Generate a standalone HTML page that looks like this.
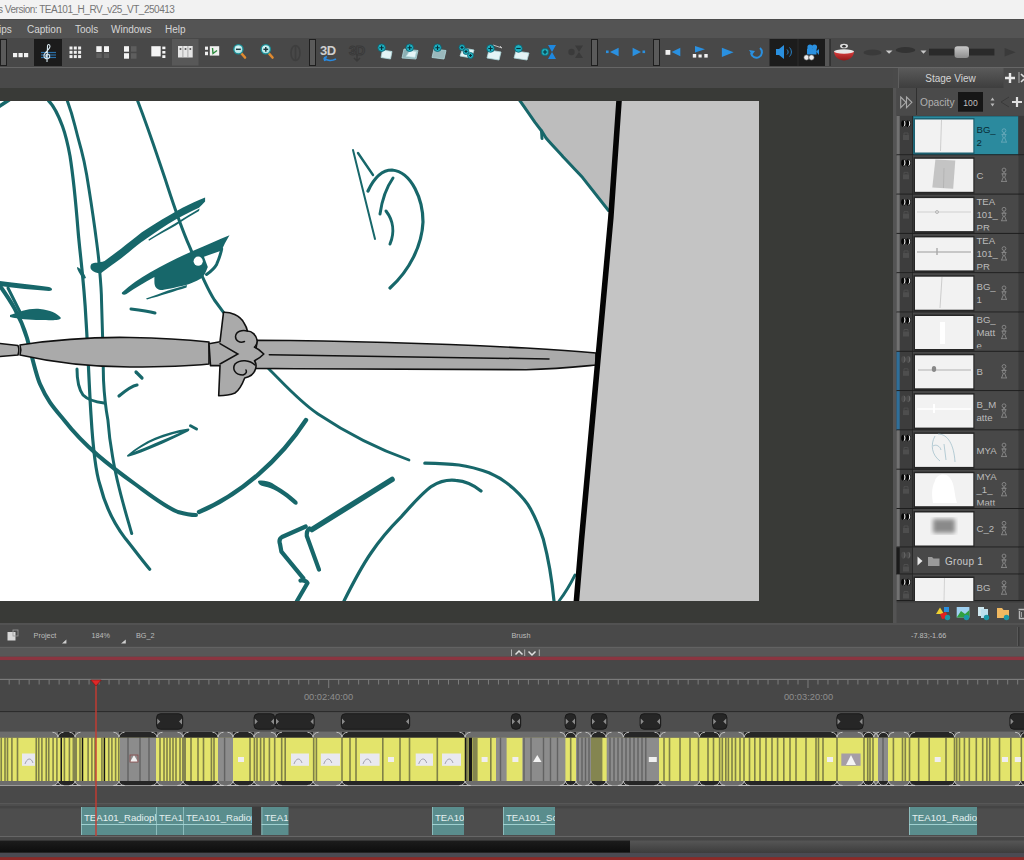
<!DOCTYPE html>
<html><head><meta charset="utf-8">
<style>
*{margin:0;padding:0;box-sizing:border-box}
html,body{width:1024px;height:860px;overflow:hidden;background:#474747;font-family:"Liberation Sans",sans-serif}
.a{position:absolute}
svg{overflow:hidden}
#title{left:0;top:0;width:1024px;height:19px;background:#f2f2f2;color:#767676;font-size:10px;letter-spacing:-0.48px}
#menu{left:0;top:19px;width:1024px;height:19px;background:#545454;border-top:1px solid #4c4c4c;color:#d6d6d6;font-size:10px}
#tool{left:0;top:38px;width:1024px;height:30px;background:#484848;border-bottom:1px solid #666}
#strip{left:0;top:68px;width:893px;height:20px;background:#494949}
#stage{left:0;top:88px;width:893px;height:535px;background:#393a37}
</style></head><body>
<div id="title" class="a"><span class="a" style="left:-2px;top:4px">s Version: TEA101_H_RV_v25_VT_250413</span></div>
<div id="menu" class="a">
<span class="a" style="left:-1px;top:4px">ips</span>
<span class="a" style="left:27px;top:4px">Caption</span>
<span class="a" style="left:75px;top:4px">Tools</span>
<span class="a" style="left:111px;top:4px">Windows</span>
<span class="a" style="left:165px;top:4px">Help</span>
</div>
<div id="tool" class="a"></div>
<div id="strip" class="a"></div>
<div id="stage" class="a"></div>

<svg class="a" style="left:0;top:38px" width="1024" height="30" viewBox="0 38 1024 30">
<defs>
<radialGradient id="zg" cx="0.45" cy="0.4" r="0.6"><stop offset="0" stop-color="#e8ffff"/><stop offset="1" stop-color="#9fdde0"/></radialGradient>
<linearGradient id="thumb" x1="0" y1="0" x2="0" y2="1"><stop offset="0" stop-color="#c8c8c8"/><stop offset="1" stop-color="#8e8e8e"/></linearGradient>
<linearGradient id="bowl" x1="0" y1="0" x2="0" y2="1"><stop offset="0" stop-color="#e04040"/><stop offset="1" stop-color="#901818"/></linearGradient>
</defs>
<!-- handles -->
<g fill="#5a5a5a" stroke="#1e1e1e" stroke-width="1">
<rect x="0.5" y="39.5" width="6" height="26"/>
<rect x="309.5" y="39.5" width="6" height="26"/>
<rect x="591.5" y="39.5" width="6" height="26"/>
<rect x="653.5" y="39.5" width="6" height="26"/>
</g>
<!-- icon1 -->
<g fill="#f2f2f2"><rect x="13" y="53" width="4.2" height="4.2"/><rect x="18.5" y="53" width="4.2" height="4.2"/><rect x="24" y="53" width="4.2" height="4.2"/></g>
<!-- selected clef -->
<rect x="34" y="39" width="28" height="27" fill="#1b1b1b"/>
<g stroke="#2a6fa8" stroke-width="1.2"><line x1="41" y1="52.5" x2="56" y2="52.5"/><line x1="41" y1="55" x2="56" y2="55"/><line x1="41" y1="57.5" x2="56" y2="57.5"/></g>
<path d="M47,62 L47.5,46 C47.5,44 50,44 50,46.5 C50,49 45,52 44,55 C43.5,58 46,59.5 48.5,58.5 C50.5,57.5 50,54 47.5,54 C45.5,54.5 45.5,57 47,57" fill="none" stroke="#d8e8f0" stroke-width="1.1"/>
<!-- grid -->
<g fill="#f0f0f0">
<rect x="69.5" y="46.5" width="3" height="3"/><rect x="73.8" y="46.5" width="3" height="3"/><rect x="78.1" y="46.5" width="3" height="3"/>
<rect x="69.5" y="50.8" width="3" height="3"/><rect x="73.8" y="50.8" width="3" height="3"/><rect x="78.1" y="50.8" width="3" height="3"/>
<rect x="69.5" y="55.1" width="3" height="3"/><rect x="73.8" y="55.1" width="3" height="3"/><rect x="78.1" y="55.1" width="3" height="3"/>
</g>
<g fill="#f4f4f4"><rect x="96.3" y="46.2" width="5.4" height="5.8"/><rect x="104" y="46.2" width="5" height="5.8"/>
<rect x="124" y="46.2" width="5" height="5.5"/><rect x="124" y="53.2" width="5" height="5.5"/>
<rect x="151.3" y="46.2" width="9.4" height="10.2"/><rect x="162.3" y="46.6" width="3.1" height="2.6"/><rect x="162.3" y="51" width="3.1" height="2.6"/><rect x="162.3" y="55.2" width="3.1" height="2.8"/></g>
<g fill="#5e5e5e"><rect x="96.3" y="53.2" width="5.4" height="4.8"/><rect x="104" y="53.2" width="5" height="4.8"/><rect x="131" y="46.2" width="5.5" height="5.5"/><rect x="131" y="53.2" width="5.5" height="5.5"/></g>
<!-- icon7 -->
<rect x="172" y="39" width="26.5" height="26.5" fill="#585858"/>
<rect x="178" y="46" width="14.7" height="11.5" fill="#e6e6e6"/>
<g fill="#9a9a9a"><rect x="182.5" y="46" width="0.8" height="11.5"/><rect x="187.5" y="46" width="0.8" height="11.5"/></g>
<g fill="#555"><circle cx="180.5" cy="49" r="1"/><circle cx="185.5" cy="49" r="1"/><circle cx="190.3" cy="49" r="1"/></g>
<!-- icon8 -->
<g fill="#efefef"><rect x="205" y="46.6" width="3" height="3.2"/><rect x="205" y="51.7" width="3" height="3.5"/><rect x="209.8" y="46.2" width="9.4" height="9.4"/></g>
<path d="M212.5,48 L213,53.5 L217,50.5" fill="none" stroke="#2c8a3c" stroke-width="1.4"/>
<!-- zoom out / in -->
<g stroke="#e08a30" stroke-width="2.6" stroke-linecap="round"><line x1="241.5" y1="53.5" x2="245" y2="57.5"/><line x1="269" y1="53.5" x2="272.5" y2="57.5"/></g>
<g fill="url(#zg)" stroke="#1a9098" stroke-width="1.3"><circle cx="238.4" cy="49.3" r="4.6"/><circle cx="265.8" cy="49.3" r="4.6"/></g>
<g stroke="#1e3a40" stroke-width="1.5"><line x1="236" y1="49.3" x2="240.8" y2="49.3"/><line x1="263.4" y1="49.3" x2="268.2" y2="49.3"/><line x1="265.8" y1="46.9" x2="265.8" y2="51.7"/></g>
<!-- faded -->
<g fill="none" stroke="#3e3e3e" stroke-width="1.6"><ellipse cx="295.5" cy="53" rx="4.5" ry="7.5"/><line x1="295.5" y1="46" x2="295.5" y2="60"/></g>
<!-- 3D -->
<text x="320" y="55" font-family="Liberation Sans" font-size="13" font-weight="bold" fill="#cfcfcf" letter-spacing="-0.5">3D</text>
<path d="M336,59 C332,61 327,61 324,58 M324,58 L327,56.5 M324,58 L325,61" fill="none" stroke="#2a8ae0" stroke-width="1.8"/>
<text x="349" y="55" font-family="Liberation Sans" font-size="13" font-weight="bold" fill="none" stroke="#3a3a3a" stroke-width="1" letter-spacing="-0.5">3D</text>
<path d="M357,54 L357,61 M354,58 L357,61 L360,58" fill="none" stroke="#3a3a3a" stroke-width="1.5"/>
<!-- new panel icons -->
<g stroke="#b0d8dc" stroke-width="0.8">
<path d="M382.5,50 L392,51.5 L390.5,59 L381,57.5 Z" fill="#e4f4f6"/>
<path d="M404,49 L418,50.5 L416,59 L402,58 Z" fill="#8cb0b4"/>
<path d="M410,50.5 L416.5,51.5 L415,57.5 L406,56.5 Z" fill="#e4f4f6"/>
<path d="M434,49 L446,50.5 L444,59 L432,57.5 Z" fill="#9ab8bc"/>
<path d="M463,48 L474,50 L471.5,58 L460,56 Z" fill="#e4f4f6"/>
<path d="M489,50 L501,52 L499,60 L487,58 Z" fill="#e4f4f6"/>
<path d="M516,51 L529,53 L527,60 L514,58 Z" fill="#e4f4f6"/>
</g>
<path d="M493,45 L502,48 L500,46" fill="none" stroke="#c8c8c8" stroke-width="0.9"/>
<g fill="#20b0c0" stroke="#0a6070" stroke-width="0.8">
<circle cx="381.6" cy="47.7" r="3.8"/><circle cx="409.7" cy="47.7" r="3.8"/><circle cx="437.5" cy="47.7" r="3.8"/>
<circle cx="462" cy="47.5" r="3"/><circle cx="466" cy="51.5" r="3"/><circle cx="470.5" cy="55.5" r="3"/>
<circle cx="490.5" cy="48.5" r="3.8"/><circle cx="518.5" cy="48.5" r="3.8"/><circle cx="545" cy="52" r="3.8"/>
</g>
<g stroke="#06303a" stroke-width="1.1">
<path d="M379.4,47.7 H383.8 M381.6,45.5 V49.9"/><path d="M407.5,47.7 H411.9 M409.7,45.5 V49.9"/><path d="M435.3,47.7 H439.7 M437.5,45.5 V49.9"/>
<path d="M460.5,47.5 H463.5 M462,46 V49"/><path d="M464.5,51.5 H467.5 M466,50 V53"/><path d="M469,55.5 H472 M470.5,54 V57"/>
<path d="M488.3,48.5 H492.7 M490.5,46.3 V50.7"/><path d="M516.3,48.5 H520.7"/><path d="M542.8,52 H547.2 M545,49.8 V54.2"/>
</g>
<path d="M548,45 L556,45 L552,52 L556,59 L548,59 L552,52 Z" fill="#1e88e0"/>
<g fill="#3a3a3a"><path d="M575,45.5 L583,45.5 L579,52 L583,58 L575,58 L579,52 Z"/><circle cx="571.5" cy="52" r="3.2"/></g>
<!-- nav -->
<g fill="#2a90e0">
<rect x="606" y="50.5" width="2.6" height="2.6"/><path d="M610,52 L618.6,47.7 L618.6,56.3 Z"/>
<path d="M641,52 L632.6,47.7 L632.6,56.3 Z"/><rect x="642.5" y="50.5" width="2.6" height="2.6"/>
<path d="M671.7,52 L680.3,47.7 L680.3,56.3 Z"/>
<path d="M705,49.2 L695,46 L695,52.4 Z"/>
<path d="M733.6,52.3 L721.9,47.7 L721.9,57 Z"/>
</g>
<g fill="#f2f2f2"><rect x="665.5" y="50" width="4.8" height="4.8"/><rect x="692.8" y="54" width="3.4" height="3.6"/><rect x="698.5" y="54.5" width="3.2" height="3"/><rect x="704.3" y="54" width="3.4" height="3.6"/></g>
<path d="M760,48 A5.5,5.5 0 1 1 751,53" fill="none" stroke="#2a90e0" stroke-width="2"/>
<path d="M749,50 L752,55 L755,51 Z" fill="#2a90e0"/>
<!-- dark group -->
<rect x="769.5" y="39" width="61" height="27" fill="#1c1c1c"/>
<rect x="797.5" y="39" width="1" height="27" fill="#2a2a2a"/>
<rect x="825" y="39" width="4.5" height="27" fill="#555"/>
<path d="M776,49 L779,49 L784,45 L784,59 L779,55 L776,55 Z" fill="#2a90e0"/>
<path d="M787,49.5 C788.5,51 788.5,53 787,54.5 M789.5,47.5 C792,50 792,54 789.5,56.5" fill="none" stroke="#2a90e0" stroke-width="0.9"/>
<g fill="#2a90e0"><circle cx="810" cy="47" r="2.6"/><circle cx="814.5" cy="47" r="2.6"/><rect x="807" y="48.5" width="9.5" height="6"/><path d="M816,51.5 L819,49 L819,55 Z"/></g>
<g fill="#eee" stroke="#333" stroke-width="0.6"><circle cx="806.5" cy="57.5" r="2.7"/><circle cx="811.5" cy="57.5" r="2.7"/></g>
<!-- bowl -->
<path d="M834,51 L854,51 C854,57 849,60.5 844,60.5 C839,60.5 834,57 834,51 Z" fill="url(#bowl)"/>
<ellipse cx="844" cy="51.5" rx="10" ry="2.2" fill="#e8e8e8"/>
<ellipse cx="844" cy="46" rx="4" ry="2.3" fill="#ddd"/>
<ellipse cx="844" cy="46.2" rx="1.8" ry="1.2" fill="#333"/>
<!-- ellipses & slider -->
<ellipse cx="872.5" cy="52.5" rx="9" ry="3" fill="#3a3a3a"/>
<ellipse cx="905.5" cy="50" rx="9.8" ry="3" fill="#333"/>
<g fill="#c8c8c8"><path d="M885.7,50.4 L892.5,50.4 L889.1,53.8 Z"/><path d="M920.5,50.4 L926.5,50.4 L923.5,53.8 Z"/></g>
<rect x="929" y="48.7" width="65.4" height="6.8" fill="#2a2a2a"/>
<rect x="954.5" y="46.2" width="14.5" height="11.8" rx="3" fill="url(#thumb)"/>
<path d="M1004.6,47.9 L1015.7,52.2 L1004.6,56.4 Z" fill="#3a3a3a"/>
</svg>

<svg class="a" style="left:0;top:0" width="1024" height="860" viewBox="0 0 1024 860">
<defs><clipPath id="cc"><rect x="0" y="101" width="759" height="500"/></clipPath></defs>
<g clip-path="url(#cc)">
<rect x="0" y="101" width="759" height="500" fill="#fff"/>
<path d="M518,101 L535,122.4 L542,131.5 L546,138 L563,156.7 L582.6,177.6 L610,212 L619,101 Z" fill="#bdbdbd"/>
<path d="M619,101 L759,101 L759,601 L576,601 Z" fill="#c4c4c4"/>
<g fill="none" stroke="#17676a" stroke-linecap="round" stroke-linejoin="round">
<path d="M519.5,100 L535,122.4 L542,131.5 L546,138 C552,145 558,151 563,156.7 C570,164 576,170.5 582.6,177.6 L608.5,210.5" stroke-width="3"/><path d="M541.5,131 L542,138.5" stroke-width="3"/>
<path d="M-1,106.5 L9,100" stroke-width="3.6"/>
<path d="M48.4,100.5 C52,104 58,114 62.5,126.25 C66,136 68,145 70,156 C73,175 76,205 78,230 C80,255 84,280 86,320 C88,350 89,385 91,415 C92.5,440 95,470 100,485 C105,505 115,525 125.4,538.6 C133,548 141,559 149.7,569.3" stroke-width="3.2"/>
<path d="M67.2,100.5 C70,108 73,118 75,126 C78,138 80,145 81.25,149.7 C84,160 85.5,168 86.7,175 C90,195 93,215 95,229.8 C97,245 98.5,255 99,263 C100.5,280 101.5,290 101.5,300 C102.5,330 103,350 103.5,380 C104.5,400 106,410 107.9,420 C109,435 110.5,445 112.6,456.7 C117,485 125,510 131.7,533.5" stroke-width="3"/>
<path d="M137.5,100.5 C145,120 153,143 160,163.75 L165.5,180 C173,203 180,225 189.5,246.4 C197,265 205,285 214.4,300 L223.5,312.3" stroke-width="3"/>
<path d="M268,368 C285,385 300,402 318,414 C345,432 375,448 409,460" stroke-width="2.8"/>
<path d="M0,286 C10,300 20,315 27,338 C33,360 36,375 40,384 C48,402 54,408 64,420 C85,447 110,466 135,484 C150,495 165,507 178,512 C185,514 190,515 196,515" stroke-width="4"/>
<path d="M8,288 L20,312" stroke-width="3"/>
<path d="M199,512 C240,495 280,460 306,420" stroke-width="4.4"/>
<path d="M353,150 L375,239" stroke-width="2"/>
<path d="M358,153 L373,175" stroke-width="2.4"/>
<path d="M368,191 C374,178 382,170 392,170 C412,172 423,200 423,222 C422,245 410,270 390,288" stroke-width="3.2"/>
<path d="M380,214 C382,200 386,188 393,178" stroke-width="3"/>
<path d="M386,211 C393,220 395,232 390,244" stroke-width="3"/>
<path d="M77,369 C77,378 78,388 83,395 C88,400 95,402 104,403" stroke-width="3"/>
<path d="M136,372 L142,378" stroke-width="3.2"/>
<path d="M131,309 C140,310 148,311 155,313" stroke-width="3"/>
<path d="M119,396 C125,391 131,386 137,385" stroke-width="3.2"/>
<path d="M424.8,463.2 C440,463.5 450,464 459,465 C470,466.5 480,469.5 489,472.8 C500,477.5 507,482.5 513.6,488.7 C521,495.5 527,502 531,509.8 C536,519 540,529 543.4,539.6 C548,557 552,580 554,601" stroke-width="3.2"/>
<path d="M344,601 C352,585 362,566 371,553 C381,538 391,527 401.4,516.6 C411,506 421,494 431.6,486.3 C440,481 448,479.5 455.6,480.3 C465,481 474,485 481,491" stroke-width="3.2"/>
<path d="M312,529.5 L392,479.5" stroke-width="5.6"/>
<path d="M305.7,526.5 L282,537 C279.5,538.5 279,541 280,544 L281.4,551.6 L303.4,578.3 M300.5,580.5 C303,580 306,580.5 307.5,583 L297,601" stroke-width="4.2"/>
<path d="M309.5,528.5 C307.5,530 306.5,533 306.8,536 L319,569.6" stroke-width="4.2"/>
<path d="M559,601 C566,592 570,585 575,575" stroke-width="2.8"/>
<path d="M190.5,425.8 L196.5,429" stroke-width="3"/>
<path d="M221.7,249 C220.5,255 218.5,260 216.6,264.4 C214,269 210,272 206.5,274.5" stroke-width="3"/>
</g>
<g fill="#17676a">

<path d="M258,481 C262,480 268,481 272,483 C280,488 290,494 297,501 C299,504 296,506 294,504 C287,498 280,492 270,488 C264,486 258,486 258,481 Z"/>
<path d="M127.5,455 C143.8,440.9 164.2,432.1 188.5,428.5 C190,429 189.5,430.5 188,431.5 C164.2,443.4 143.8,452.2 129,456.5 C127,457 126.5,456 127.5,455 Z M134,452 C146.7,442.9 162,436.4 180,432.5 C162,440.4 146.7,446.9 134,452 Z" fill-rule="evenodd"/>
<path d="M91.6,263.8 C94,262.5 99,263 104.6,261 C110,257 116,252.5 121,248.8 C128,243 135,237.5 141.5,232.4 C148,228 155,223.5 162,219.4 C169,215.5 176,211.5 182.5,207.8 C190,204 198,200.5 205.1,197.5 L205.1,201.6 C203,204 201,206 199,207.8 C191,211.5 183,215.5 175.7,219.4 C166,225 157,231 148.4,237.2 C146,239 143.5,240.5 141.5,242 C135,247 128,253 121,258.4 C114,263.5 107,268.5 100.5,273.4 C97,273.5 93,272 91,269.3 C90,267.5 90.5,265 91.6,263.8 Z"/>
<path d="M148.4,239.6 C157,234 166,228.5 175.7,223 C184,218 192,213 199.6,208.5 L199,211 C191,215.5 183,220.5 175.7,225.6 C166,231 157,236 149,240.8 Z"/>
<path d="M77,267 C80,268 84,272 86,278 L83,279 C80,274 77,270 77,267 Z"/>
<path d="M122,292.5 C130,285 140,278 150,272.5 C165,264 180,256.5 195,250 C207,245 218,240 229.5,235.3 C226,241 223.5,246 221.7,250.4 L204,256.7 L207.8,267 C206,272 204,276 201.4,278.3 C195,282 190,284 186,285 C175,287.5 165,290 160.8,290 C156,289.5 154.4,286 154.4,282 L154.4,277 C145,282 135,288 126.5,294 C124,295.5 121,294.5 122,292.5 Z"/>

<path d="M146,298.5 C155,295.5 162,292.5 168,290.5 L187,285 L186.5,287.5 C175,291 160,296 147,299.5 Z"/>
<path d="M0,281 C15,283 35,285 49,287 C53,288 53,291 49,291 C35,290 15,288 0,286 Z"/>
<path d="M10,315 C20,312 28,308 40,309 C50,310 57,313 61,318 C60,321 50,320 40,320 C30,320 18,319 10,317 Z"/>
</g>
<circle cx="198.2" cy="261.2" r="4.6" fill="#fff"/>
<g fill="#aaaaaa" stroke="#111" stroke-width="1.6" stroke-linejoin="round">
<path d="M-5,343 L18,345.5 C19,348 19,352 18,355 L-5,357 Z"/>
<path d="M20,345 C60,339 100,337 130,337.5 C160,338 190,340 209,342 L209,364 C190,366 160,367 130,367 C100,367 60,364 20,355 C21,352 21,348 20,345 Z"/>
<path d="M257,340.3 C350,341 450,344 526,348 C560,350 585,352 596,353 L596,365 C585,366 560,369 526,369.7 C450,370 350,369 254,368.4 Z"/>
<path d="M223.5,312.3 C230,312 240,315 244,323 C246,326 247,329 247.4,331 C252,331 256,335 257,340 C257.5,343 256.5,345.5 254.5,347.2 C258,348.5 261,351 263.8,354 C261,357 258,359 254.5,360.8 C256,363 256.5,366 255.5,369 C254,374 250,377 244.7,378 C242,385 238,391 235,393 C230,395 224,395.7 218.7,395.7 L220,365.6 L210.5,365.6 L209,343.7 L220,341.7 Z"/>
</g>
<g fill="none" stroke="#111" stroke-width="1.5" stroke-linecap="round">
<path d="M220,343.7 L237.9,354 L220,364"/>
<path d="M269.3,354.7 L549,359"/>
<path d="M247.4,331 C242,329.5 236,331.5 235.5,336.5 C235.5,341 240,343.5 244.5,341.5"/>
<path d="M255,365 C250,360 240,359 235,364 C232,369 235,375 243,375 C246,374 247,372 246,370"/>
</g>
<path d="M616.2,101 L621.8,101 L613.6,218 L584.3,540 L579.2,601 L573.6,601 L578.7,540 L608,218 Z" fill="#050505"/>
</g>
</svg>

<svg class="a" style="left:893px;top:68px" width="131" height="555" viewBox="893 68 131 555">
<defs><linearGradient id="tabg" x1="0" y1="0" x2="0" y2="1"><stop offset="0" stop-color="#5a5a5a"/><stop offset="1" stop-color="#3e3e3e"/></linearGradient></defs>
<rect x="893" y="68" width="131" height="20" fill="#4a4a4a"/>
<rect x="898" y="68" width="105.5" height="20" fill="url(#tabg)"/>
<rect x="898" y="68" width="1" height="20" fill="#5e5e5e"/>
<text x="950.5" y="82" text-anchor="middle" font-family="Liberation Sans" font-size="10" fill="#d4d4d4">Stage View</text>
<path d="M1005,78 H1015 M1010,73 V83" stroke="#e8e8e8" stroke-width="2.4"/>
<rect x="1018.5" y="72" width="1" height="11" fill="#aaa"/>
<path d="M1021,74 L1024,77 M1021,82 L1024,79" stroke="#ddd" stroke-width="1.6"/>
<rect x="893" y="88" width="131" height="535" fill="#474747"/>
<rect x="893" y="88" width="3.5" height="513" fill="#545454"/>
<rect x="896.5" y="88" width="127.5" height="27" fill="#4a4a4a"/>
<path d="M900.7,97 L906,102.3 L900.7,107.7 Z M906.5,97 L911.9,102.3 L906.5,107.7 Z" fill="none" stroke="#a8a8a8" stroke-width="1.1"/>
<rect x="916" y="88" width="1" height="27" fill="#303030"/>
<text x="920" y="106" font-family="Liberation Sans" font-size="10.2" fill="#b0b0b0">Opacity</text>
<rect x="958" y="92" width="25" height="19.7" fill="#161616"/>
<text x="970.5" y="105.5" text-anchor="middle" font-family="Liberation Sans" font-size="8.6" fill="#c0c0c0">100</text>
<path d="M990.5,100.5 L992.5,97.5 L994.5,100.5 Z M990.5,103.5 L992.5,106.5 L994.5,103.5 Z" fill="#b8b8b8"/>
<path d="M1009,97 L1001,102 L1009,107" fill="none" stroke="#3a3a3a" stroke-width="1"/>
<path d="M1012,102 H1022 M1017,97 V107" stroke="#e0e0e0" stroke-width="2.2"/>
<rect x="896.5" y="116" width="16" height="39.30000000000001" fill="#3d3d3d"/>
<rect x="896.5" y="116" width="3.2" height="39.30000000000001" fill="#727272"/>
<rect x="912" y="116" width="1" height="39.30000000000001" fill="#2a2a2a"/>
<ellipse cx="903.5" cy="123.7" rx="2.3" ry="3.4" fill="#050505"/>
<path d="M903.7,120.5 C906.1,121.3 906.1,126.10000000000001 903.3,127.0 C904.7,125.2 904.7,122.2 903.7,120.5 Z" fill="#ffffff"/>
<ellipse cx="908.3" cy="123.7" rx="2.3" ry="3.4" fill="#050505"/>
<path d="M908.5,120.5 C910.9,121.3 910.9,126.10000000000001 908.0999999999999,127.0 C909.5,125.2 909.5,122.2 908.5,120.5 Z" fill="#ffffff"/>
<rect x="903" y="135" width="6" height="5" fill="#4e4e4e"/><path d="M904,135 V133 H908 V135" fill="none" stroke="#4e4e4e" stroke-width="1"/>
<rect x="913" y="116" width="105.5" height="39.30000000000001" fill="#1d5f70"/>
<rect x="913.6" y="116.6" width="104.4" height="37.70000000000001" fill="#2b8a9e"/>
<rect x="1018.5" y="116" width="5.5" height="39.30000000000001" fill="#3a3a3a"/>
<rect x="896.5" y="154.3" width="127.5" height="1.3" fill="#1e1e1e"/>
<rect x="913.5" y="118" width="61" height="36.3" fill="#1d6070"/>
<rect x="915" y="119.5" width="58.3" height="33" fill="#f2f2f2"/>
<svg x="974" y="116" width="26" height="35.80000000000001" viewBox="974 116 26 35.80000000000001">
<text x="976.5" y="132.85" font-family="Liberation Sans" font-size="9.6" fill="#082a35">BG_</text>
<text x="976.5" y="145.85" font-family="Liberation Sans" font-size="9.6" fill="#082a35">2</text>
</svg>
<g fill="none" stroke="#6aaabb" stroke-width="0.85"><circle cx="1004" cy="130.65" r="1.9"/><ellipse cx="1004" cy="135.65" rx="1.4" ry="2.4"/><path d="M1001.4,134.65 H1006.6 M1003.2,137.95000000000002 L1001.6,142.15 M1004.8,137.95000000000002 L1006.4,142.15 M1001,142.15 H1007"/></g>
<rect x="896.5" y="155.3" width="16" height="39.29999999999998" fill="#3d3d3d"/>
<rect x="896.5" y="155.3" width="3.2" height="39.29999999999998" fill="#727272"/>
<rect x="912" y="155.3" width="1" height="39.29999999999998" fill="#2a2a2a"/>
<ellipse cx="903.5" cy="163.0" rx="2.3" ry="3.4" fill="#050505"/>
<path d="M903.7,159.8 C906.1,160.6 906.1,165.4 903.3,166.3 C904.7,164.5 904.7,161.5 903.7,159.8 Z" fill="#ffffff"/>
<ellipse cx="908.3" cy="163.0" rx="2.3" ry="3.4" fill="#050505"/>
<path d="M908.5,159.8 C910.9,160.6 910.9,165.4 908.0999999999999,166.3 C909.5,164.5 909.5,161.5 908.5,159.8 Z" fill="#ffffff"/>
<rect x="903" y="174.3" width="6" height="5" fill="#4e4e4e"/><path d="M904,174.3 V172.3 H908 V174.3" fill="none" stroke="#4e4e4e" stroke-width="1"/>
<rect x="913" y="155.3" width="105.5" height="39.29999999999998" fill="#484848"/>
<rect x="1018.5" y="155.3" width="5.5" height="39.29999999999998" fill="#3a3a3a"/>
<rect x="896.5" y="193.6" width="127.5" height="1.3" fill="#1e1e1e"/>
<rect x="913.5" y="157.3" width="61" height="36.3" fill="#262626"/>
<rect x="915" y="158.8" width="58.3" height="33" fill="#f2f2f2"/>
<svg x="974" y="155.3" width="26" height="35.79999999999998" viewBox="974 155.3 26 35.79999999999998">
<text x="976.5" y="178.64999999999998" font-family="Liberation Sans" font-size="9.6" fill="#bcbcbc">C</text>
</svg>
<g fill="none" stroke="#8c8c8c" stroke-width="0.85"><circle cx="1004" cy="169.95" r="1.9"/><ellipse cx="1004" cy="174.95" rx="1.4" ry="2.4"/><path d="M1001.4,173.95 H1006.6 M1003.2,177.25 L1001.6,181.45 M1004.8,177.25 L1006.4,181.45 M1001,181.45 H1007"/></g>
<rect x="896.5" y="194.6" width="16" height="39.30000000000001" fill="#3d3d3d"/>
<rect x="896.5" y="194.6" width="3.2" height="39.30000000000001" fill="#727272"/>
<rect x="912" y="194.6" width="1" height="39.30000000000001" fill="#2a2a2a"/>
<ellipse cx="903.5" cy="202.29999999999998" rx="2.3" ry="3.4" fill="#050505"/>
<path d="M903.7,199.1 C906.1,199.89999999999998 906.1,204.7 903.3,205.6 C904.7,203.79999999999998 904.7,200.79999999999998 903.7,199.1 Z" fill="#ffffff"/>
<ellipse cx="908.3" cy="202.29999999999998" rx="2.3" ry="3.4" fill="#050505"/>
<path d="M908.5,199.1 C910.9,199.89999999999998 910.9,204.7 908.0999999999999,205.6 C909.5,203.79999999999998 909.5,200.79999999999998 908.5,199.1 Z" fill="#ffffff"/>
<rect x="903" y="213.6" width="6" height="5" fill="#4e4e4e"/><path d="M904,213.6 V211.6 H908 V213.6" fill="none" stroke="#4e4e4e" stroke-width="1"/>
<rect x="913" y="194.6" width="105.5" height="39.30000000000001" fill="#484848"/>
<rect x="1018.5" y="194.6" width="5.5" height="39.30000000000001" fill="#3a3a3a"/>
<rect x="896.5" y="232.9" width="127.5" height="1.3" fill="#1e1e1e"/>
<rect x="913.5" y="196.6" width="61" height="36.3" fill="#262626"/>
<rect x="915" y="198.1" width="58.3" height="33" fill="#f2f2f2"/>
<svg x="974" y="194.6" width="26" height="35.80000000000001" viewBox="974 194.6 26 35.80000000000001">
<text x="976.5" y="204.95" font-family="Liberation Sans" font-size="9.6" fill="#bcbcbc">TEA</text>
<text x="976.5" y="217.95" font-family="Liberation Sans" font-size="9.6" fill="#bcbcbc">101_</text>
<text x="976.5" y="230.95" font-family="Liberation Sans" font-size="9.6" fill="#bcbcbc">PR</text>
</svg>
<g fill="none" stroke="#8c8c8c" stroke-width="0.85"><circle cx="1004" cy="209.25" r="1.9"/><ellipse cx="1004" cy="214.25" rx="1.4" ry="2.4"/><path d="M1001.4,213.25 H1006.6 M1003.2,216.55 L1001.6,220.75 M1004.8,216.55 L1006.4,220.75 M1001,220.75 H1007"/></g>
<rect x="896.5" y="233.9" width="16" height="39.29999999999998" fill="#3d3d3d"/>
<rect x="896.5" y="233.9" width="3.2" height="39.29999999999998" fill="#727272"/>
<rect x="912" y="233.9" width="1" height="39.29999999999998" fill="#2a2a2a"/>
<ellipse cx="903.5" cy="241.6" rx="2.3" ry="3.4" fill="#050505"/>
<path d="M903.7,238.4 C906.1,239.2 906.1,244.0 903.3,244.9 C904.7,243.1 904.7,240.1 903.7,238.4 Z" fill="#ffffff"/>
<ellipse cx="908.3" cy="241.6" rx="2.3" ry="3.4" fill="#050505"/>
<path d="M908.5,238.4 C910.9,239.2 910.9,244.0 908.0999999999999,244.9 C909.5,243.1 909.5,240.1 908.5,238.4 Z" fill="#ffffff"/>
<rect x="903" y="252.9" width="6" height="5" fill="#4e4e4e"/><path d="M904,252.9 V250.9 H908 V252.9" fill="none" stroke="#4e4e4e" stroke-width="1"/>
<rect x="913" y="233.9" width="105.5" height="39.29999999999998" fill="#484848"/>
<rect x="1018.5" y="233.9" width="5.5" height="39.29999999999998" fill="#3a3a3a"/>
<rect x="896.5" y="272.2" width="127.5" height="1.3" fill="#1e1e1e"/>
<rect x="913.5" y="235.9" width="61" height="36.3" fill="#262626"/>
<rect x="915" y="237.4" width="58.3" height="33" fill="#f2f2f2"/>
<svg x="974" y="233.9" width="26" height="35.79999999999998" viewBox="974 233.9 26 35.79999999999998">
<text x="976.5" y="244.25" font-family="Liberation Sans" font-size="9.6" fill="#bcbcbc">TEA</text>
<text x="976.5" y="257.25" font-family="Liberation Sans" font-size="9.6" fill="#bcbcbc">101_</text>
<text x="976.5" y="270.25" font-family="Liberation Sans" font-size="9.6" fill="#bcbcbc">PR</text>
</svg>
<g fill="none" stroke="#8c8c8c" stroke-width="0.85"><circle cx="1004" cy="248.55" r="1.9"/><ellipse cx="1004" cy="253.55" rx="1.4" ry="2.4"/><path d="M1001.4,252.55 H1006.6 M1003.2,255.85000000000002 L1001.6,260.05 M1004.8,255.85000000000002 L1006.4,260.05 M1001,260.05 H1007"/></g>
<rect x="896.5" y="273.2" width="16" height="39.30000000000001" fill="#3d3d3d"/>
<rect x="896.5" y="273.2" width="3.2" height="39.30000000000001" fill="#727272"/>
<rect x="912" y="273.2" width="1" height="39.30000000000001" fill="#2a2a2a"/>
<ellipse cx="903.5" cy="280.9" rx="2.3" ry="3.4" fill="#050505"/>
<path d="M903.7,277.7 C906.1,278.5 906.1,283.29999999999995 903.3,284.2 C904.7,282.4 904.7,279.4 903.7,277.7 Z" fill="#ffffff"/>
<ellipse cx="908.3" cy="280.9" rx="2.3" ry="3.4" fill="#050505"/>
<path d="M908.5,277.7 C910.9,278.5 910.9,283.29999999999995 908.0999999999999,284.2 C909.5,282.4 909.5,279.4 908.5,277.7 Z" fill="#ffffff"/>
<rect x="903" y="292.2" width="6" height="5" fill="#4e4e4e"/><path d="M904,292.2 V290.2 H908 V292.2" fill="none" stroke="#4e4e4e" stroke-width="1"/>
<rect x="913" y="273.2" width="105.5" height="39.30000000000001" fill="#484848"/>
<rect x="1018.5" y="273.2" width="5.5" height="39.30000000000001" fill="#3a3a3a"/>
<rect x="896.5" y="311.5" width="127.5" height="1.3" fill="#1e1e1e"/>
<rect x="913.5" y="275.2" width="61" height="36.3" fill="#262626"/>
<rect x="915" y="276.7" width="58.3" height="33" fill="#f2f2f2"/>
<svg x="974" y="273.2" width="26" height="35.80000000000001" viewBox="974 273.2 26 35.80000000000001">
<text x="976.5" y="290.05" font-family="Liberation Sans" font-size="9.6" fill="#bcbcbc">BG_</text>
<text x="976.5" y="303.05" font-family="Liberation Sans" font-size="9.6" fill="#bcbcbc">1</text>
</svg>
<g fill="none" stroke="#8c8c8c" stroke-width="0.85"><circle cx="1004" cy="287.85" r="1.9"/><ellipse cx="1004" cy="292.85" rx="1.4" ry="2.4"/><path d="M1001.4,291.85 H1006.6 M1003.2,295.15000000000003 L1001.6,299.35 M1004.8,295.15000000000003 L1006.4,299.35 M1001,299.35 H1007"/></g>
<rect x="896.5" y="312.5" width="16" height="39.30000000000001" fill="#3d3d3d"/>
<rect x="896.5" y="312.5" width="3.2" height="39.30000000000001" fill="#727272"/>
<rect x="912" y="312.5" width="1" height="39.30000000000001" fill="#2a2a2a"/>
<ellipse cx="903.5" cy="320.2" rx="2.3" ry="3.4" fill="#050505"/>
<path d="M903.7,317.0 C906.1,317.8 906.1,322.59999999999997 903.3,323.5 C904.7,321.7 904.7,318.7 903.7,317.0 Z" fill="#ffffff"/>
<ellipse cx="908.3" cy="320.2" rx="2.3" ry="3.4" fill="#050505"/>
<path d="M908.5,317.0 C910.9,317.8 910.9,322.59999999999997 908.0999999999999,323.5 C909.5,321.7 909.5,318.7 908.5,317.0 Z" fill="#ffffff"/>
<rect x="903" y="331.5" width="6" height="5" fill="#4e4e4e"/><path d="M904,331.5 V329.5 H908 V331.5" fill="none" stroke="#4e4e4e" stroke-width="1"/>
<rect x="913" y="312.5" width="105.5" height="39.30000000000001" fill="#484848"/>
<rect x="1018.5" y="312.5" width="5.5" height="39.30000000000001" fill="#3a3a3a"/>
<rect x="896.5" y="350.8" width="127.5" height="1.3" fill="#1e1e1e"/>
<rect x="913.5" y="314.5" width="61" height="36.3" fill="#262626"/>
<rect x="915" y="316.0" width="58.3" height="33" fill="#f2f2f2"/>
<svg x="974" y="312.5" width="26" height="35.80000000000001" viewBox="974 312.5 26 35.80000000000001">
<text x="976.5" y="322.84999999999997" font-family="Liberation Sans" font-size="9.6" fill="#bcbcbc">BG_</text>
<text x="976.5" y="335.84999999999997" font-family="Liberation Sans" font-size="9.6" fill="#bcbcbc">Matt</text>
<text x="976.5" y="348.84999999999997" font-family="Liberation Sans" font-size="9.6" fill="#bcbcbc">e</text>
</svg>
<g fill="none" stroke="#8c8c8c" stroke-width="0.85"><circle cx="1004" cy="327.15" r="1.9"/><ellipse cx="1004" cy="332.15" rx="1.4" ry="2.4"/><path d="M1001.4,331.15 H1006.6 M1003.2,334.45 L1001.6,338.65 M1004.8,334.45 L1006.4,338.65 M1001,338.65 H1007"/></g>
<rect x="896.5" y="351.8" width="16" height="39.30000000000001" fill="#3d3d3d"/>
<rect x="896.5" y="351.8" width="3.2" height="39.30000000000001" fill="#2f6f9a"/>
<rect x="912" y="351.8" width="1" height="39.30000000000001" fill="#2a2a2a"/>
<ellipse cx="903.5" cy="359.5" rx="2.3" ry="3.4" fill="#4a4a4a"/>
<path d="M903.7,356.3 C906.1,357.1 906.1,361.9 903.3,362.8 C904.7,361.0 904.7,358.0 903.7,356.3 Z" fill="#6a6a6a"/>
<ellipse cx="908.3" cy="359.5" rx="2.3" ry="3.4" fill="#4a4a4a"/>
<path d="M908.5,356.3 C910.9,357.1 910.9,361.9 908.0999999999999,362.8 C909.5,361.0 909.5,358.0 908.5,356.3 Z" fill="#6a6a6a"/>
<rect x="903" y="370.8" width="6" height="5" fill="#4e4e4e"/><path d="M904,370.8 V368.8 H908 V370.8" fill="none" stroke="#4e4e4e" stroke-width="1"/>
<rect x="913" y="351.8" width="105.5" height="39.30000000000001" fill="#484848"/>
<rect x="1018.5" y="351.8" width="5.5" height="39.30000000000001" fill="#3a3a3a"/>
<rect x="896.5" y="390.1" width="127.5" height="1.3" fill="#1e1e1e"/>
<rect x="913.5" y="353.8" width="61" height="36.3" fill="#262626"/>
<rect x="915" y="355.3" width="58.3" height="33" fill="#f2f2f2"/>
<svg x="974" y="351.8" width="26" height="35.80000000000001" viewBox="974 351.8 26 35.80000000000001">
<text x="976.5" y="375.15000000000003" font-family="Liberation Sans" font-size="9.6" fill="#bcbcbc">B</text>
</svg>
<g fill="none" stroke="#8c8c8c" stroke-width="0.85"><circle cx="1004" cy="366.45000000000005" r="1.9"/><ellipse cx="1004" cy="371.45000000000005" rx="1.4" ry="2.4"/><path d="M1001.4,370.45000000000005 H1006.6 M1003.2,373.75000000000006 L1001.6,377.95000000000005 M1004.8,373.75000000000006 L1006.4,377.95000000000005 M1001,377.95000000000005 H1007"/></g>
<rect x="896.5" y="391.1" width="16" height="39.299999999999955" fill="#3d3d3d"/>
<rect x="896.5" y="391.1" width="3.2" height="39.299999999999955" fill="#2f6f9a"/>
<rect x="912" y="391.1" width="1" height="39.299999999999955" fill="#2a2a2a"/>
<ellipse cx="903.5" cy="398.8" rx="2.3" ry="3.4" fill="#4a4a4a"/>
<path d="M903.7,395.6 C906.1,396.40000000000003 906.1,401.2 903.3,402.1 C904.7,400.3 904.7,397.3 903.7,395.6 Z" fill="#6a6a6a"/>
<ellipse cx="908.3" cy="398.8" rx="2.3" ry="3.4" fill="#4a4a4a"/>
<path d="M908.5,395.6 C910.9,396.40000000000003 910.9,401.2 908.0999999999999,402.1 C909.5,400.3 909.5,397.3 908.5,395.6 Z" fill="#6a6a6a"/>
<rect x="903" y="410.1" width="6" height="5" fill="#4e4e4e"/><path d="M904,410.1 V408.1 H908 V410.1" fill="none" stroke="#4e4e4e" stroke-width="1"/>
<rect x="913" y="391.1" width="105.5" height="39.299999999999955" fill="#484848"/>
<rect x="1018.5" y="391.1" width="5.5" height="39.299999999999955" fill="#3a3a3a"/>
<rect x="896.5" y="429.4" width="127.5" height="1.3" fill="#1e1e1e"/>
<rect x="913.5" y="393.1" width="61" height="36.3" fill="#262626"/>
<rect x="915" y="394.6" width="58.3" height="33" fill="#f2f2f2"/>
<svg x="974" y="391.1" width="26" height="35.799999999999955" viewBox="974 391.1 26 35.799999999999955">
<text x="976.5" y="407.95" font-family="Liberation Sans" font-size="9.6" fill="#bcbcbc">B_M</text>
<text x="976.5" y="420.95" font-family="Liberation Sans" font-size="9.6" fill="#bcbcbc">atte</text>
</svg>
<g fill="none" stroke="#8c8c8c" stroke-width="0.85"><circle cx="1004" cy="405.75" r="1.9"/><ellipse cx="1004" cy="410.75" rx="1.4" ry="2.4"/><path d="M1001.4,409.75 H1006.6 M1003.2,413.05 L1001.6,417.25 M1004.8,413.05 L1006.4,417.25 M1001,417.25 H1007"/></g>
<rect x="896.5" y="430.4" width="16" height="39.30000000000001" fill="#3d3d3d"/>
<rect x="896.5" y="430.4" width="3.2" height="39.30000000000001" fill="#727272"/>
<rect x="912" y="430.4" width="1" height="39.30000000000001" fill="#2a2a2a"/>
<ellipse cx="903.5" cy="438.09999999999997" rx="2.3" ry="3.4" fill="#050505"/>
<path d="M903.7,434.9 C906.1,435.7 906.1,440.49999999999994 903.3,441.4 C904.7,439.59999999999997 904.7,436.59999999999997 903.7,434.9 Z" fill="#ffffff"/>
<ellipse cx="908.3" cy="438.09999999999997" rx="2.3" ry="3.4" fill="#050505"/>
<path d="M908.5,434.9 C910.9,435.7 910.9,440.49999999999994 908.0999999999999,441.4 C909.5,439.59999999999997 909.5,436.59999999999997 908.5,434.9 Z" fill="#ffffff"/>
<rect x="903" y="449.4" width="6" height="5" fill="#4e4e4e"/><path d="M904,449.4 V447.4 H908 V449.4" fill="none" stroke="#4e4e4e" stroke-width="1"/>
<rect x="913" y="430.4" width="105.5" height="39.30000000000001" fill="#484848"/>
<rect x="1018.5" y="430.4" width="5.5" height="39.30000000000001" fill="#3a3a3a"/>
<rect x="896.5" y="468.7" width="127.5" height="1.3" fill="#1e1e1e"/>
<rect x="913.5" y="432.4" width="61" height="36.3" fill="#262626"/>
<rect x="915" y="433.9" width="58.3" height="33" fill="#f2f2f2"/>
<svg x="974" y="430.4" width="26" height="35.80000000000001" viewBox="974 430.4 26 35.80000000000001">
<text x="976.5" y="453.74999999999994" font-family="Liberation Sans" font-size="9.6" fill="#bcbcbc">MYA</text>
</svg>
<g fill="none" stroke="#8c8c8c" stroke-width="0.85"><circle cx="1004" cy="445.04999999999995" r="1.9"/><ellipse cx="1004" cy="450.04999999999995" rx="1.4" ry="2.4"/><path d="M1001.4,449.04999999999995 H1006.6 M1003.2,452.34999999999997 L1001.6,456.54999999999995 M1004.8,452.34999999999997 L1006.4,456.54999999999995 M1001,456.54999999999995 H1007"/></g>
<rect x="896.5" y="469.7" width="16" height="39.30000000000001" fill="#3d3d3d"/>
<rect x="896.5" y="469.7" width="3.2" height="39.30000000000001" fill="#727272"/>
<rect x="912" y="469.7" width="1" height="39.30000000000001" fill="#2a2a2a"/>
<ellipse cx="903.5" cy="477.4" rx="2.3" ry="3.4" fill="#050505"/>
<path d="M903.7,474.2 C906.1,475.0 906.1,479.79999999999995 903.3,480.7 C904.7,478.9 904.7,475.9 903.7,474.2 Z" fill="#ffffff"/>
<ellipse cx="908.3" cy="477.4" rx="2.3" ry="3.4" fill="#050505"/>
<path d="M908.5,474.2 C910.9,475.0 910.9,479.79999999999995 908.0999999999999,480.7 C909.5,478.9 909.5,475.9 908.5,474.2 Z" fill="#ffffff"/>
<rect x="903" y="488.7" width="6" height="5" fill="#4e4e4e"/><path d="M904,488.7 V486.7 H908 V488.7" fill="none" stroke="#4e4e4e" stroke-width="1"/>
<rect x="913" y="469.7" width="105.5" height="39.30000000000001" fill="#484848"/>
<rect x="1018.5" y="469.7" width="5.5" height="39.30000000000001" fill="#3a3a3a"/>
<rect x="896.5" y="508" width="127.5" height="1.3" fill="#1e1e1e"/>
<rect x="913.5" y="471.7" width="61" height="36.3" fill="#262626"/>
<rect x="915" y="473.2" width="58.3" height="33" fill="#f2f2f2"/>
<svg x="974" y="469.7" width="26" height="35.80000000000001" viewBox="974 469.7 26 35.80000000000001">
<text x="976.5" y="480.05" font-family="Liberation Sans" font-size="9.6" fill="#bcbcbc">MYA</text>
<text x="976.5" y="493.05" font-family="Liberation Sans" font-size="9.6" fill="#bcbcbc">_1_</text>
<text x="976.5" y="506.05" font-family="Liberation Sans" font-size="9.6" fill="#bcbcbc">Matt</text>
</svg>
<g fill="none" stroke="#8c8c8c" stroke-width="0.85"><circle cx="1004" cy="484.35" r="1.9"/><ellipse cx="1004" cy="489.35" rx="1.4" ry="2.4"/><path d="M1001.4,488.35 H1006.6 M1003.2,491.65000000000003 L1001.6,495.85 M1004.8,491.65000000000003 L1006.4,495.85 M1001,495.85 H1007"/></g>
<rect x="896.5" y="509" width="16" height="38.5" fill="#3d3d3d"/>
<rect x="896.5" y="509" width="3.2" height="38.5" fill="#727272"/>
<rect x="912" y="509" width="1" height="38.5" fill="#2a2a2a"/>
<ellipse cx="903.5" cy="516.7" rx="2.3" ry="3.4" fill="#050505"/>
<path d="M903.7,513.5 C906.1,514.3000000000001 906.1,519.1 903.3,520.0 C904.7,518.2 904.7,515.2 903.7,513.5 Z" fill="#ffffff"/>
<ellipse cx="908.3" cy="516.7" rx="2.3" ry="3.4" fill="#050505"/>
<path d="M908.5,513.5 C910.9,514.3000000000001 910.9,519.1 908.0999999999999,520.0 C909.5,518.2 909.5,515.2 908.5,513.5 Z" fill="#ffffff"/>
<rect x="903" y="528" width="6" height="5" fill="#4e4e4e"/><path d="M904,528 V526 H908 V528" fill="none" stroke="#4e4e4e" stroke-width="1"/>
<rect x="913" y="509" width="105.5" height="38.5" fill="#484848"/>
<rect x="1018.5" y="509" width="5.5" height="38.5" fill="#3a3a3a"/>
<rect x="896.5" y="546.5" width="127.5" height="1.3" fill="#1e1e1e"/>
<rect x="913.5" y="511" width="61" height="36.3" fill="#262626"/>
<rect x="915" y="512.5" width="58.3" height="33" fill="#f2f2f2"/>
<svg x="974" y="509" width="26" height="35.0" viewBox="974 509 26 35.0">
<text x="976.5" y="531.95" font-family="Liberation Sans" font-size="9.6" fill="#bcbcbc">C_2</text>
</svg>
<g fill="none" stroke="#8c8c8c" stroke-width="0.85"><circle cx="1004" cy="523.25" r="1.9"/><ellipse cx="1004" cy="528.25" rx="1.4" ry="2.4"/><path d="M1001.4,527.25 H1006.6 M1003.2,530.55 L1001.6,534.75 M1004.8,530.55 L1006.4,534.75 M1001,534.75 H1007"/></g>
<rect x="896.5" y="547.5" width="16" height="27.0" fill="#3d3d3d"/>
<rect x="896.5" y="547.5" width="3.2" height="27.0" fill="#1a1a1a"/>
<rect x="912" y="547.5" width="1" height="27.0" fill="#2a2a2a"/>
<ellipse cx="903.5" cy="555.2" rx="2.3" ry="3.4" fill="#4a4a4a"/>
<path d="M903.7,552.0 C906.1,552.8000000000001 906.1,557.6 903.3,558.5 C904.7,556.7 904.7,553.7 903.7,552.0 Z" fill="#6a6a6a"/>
<ellipse cx="908.3" cy="555.2" rx="2.3" ry="3.4" fill="#4a4a4a"/>
<path d="M908.5,552.0 C910.9,552.8000000000001 910.9,557.6 908.0999999999999,558.5 C909.5,556.7 909.5,553.7 908.5,552.0 Z" fill="#6a6a6a"/>
<rect x="903" y="566.5" width="6" height="5" fill="#4e4e4e"/><path d="M904,566.5 V564.5 H908 V566.5" fill="none" stroke="#4e4e4e" stroke-width="1"/>
<rect x="913" y="547.5" width="105.5" height="27.0" fill="#484848"/>
<rect x="1018.5" y="547.5" width="5.5" height="27.0" fill="#3a3a3a"/>
<rect x="896.5" y="573.5" width="127.5" height="1.3" fill="#1e1e1e"/>
<path d="M917.5,556.5 L922.5,561.0 L917.5,565.5 Z" fill="#e8e8e8"/>
<path d="M928,557.0 h4 l1.5,1.5 h6 v7.5 h-11.5 Z" fill="#9a9a9a"/>
<text x="945" y="564.6" font-family="Liberation Sans" font-size="10" fill="#c8c8c8" letter-spacing="0.3">Group  1</text>
<g fill="none" stroke="#8c8c8c" stroke-width="0.85"><circle cx="1004" cy="556.0" r="1.9"/><ellipse cx="1004" cy="561.0" rx="1.4" ry="2.4"/><path d="M1001.4,560.0 H1006.6 M1003.2,563.3 L1001.6,567.5 M1004.8,563.3 L1006.4,567.5 M1001,567.5 H1007"/></g>
<rect x="896.5" y="574.5" width="16" height="26.5" fill="#3d3d3d"/>
<rect x="896.5" y="574.5" width="3.2" height="26.5" fill="#727272"/>
<rect x="912" y="574.5" width="1" height="26.5" fill="#2a2a2a"/>
<ellipse cx="903.5" cy="582.2" rx="2.3" ry="3.4" fill="#050505"/>
<path d="M903.7,579.0 C906.1,579.8000000000001 906.1,584.6 903.3,585.5 C904.7,583.7 904.7,580.7 903.7,579.0 Z" fill="#ffffff"/>
<ellipse cx="908.3" cy="582.2" rx="2.3" ry="3.4" fill="#050505"/>
<path d="M908.5,579.0 C910.9,579.8000000000001 910.9,584.6 908.0999999999999,585.5 C909.5,583.7 909.5,580.7 908.5,579.0 Z" fill="#ffffff"/>
<rect x="903" y="593.5" width="6" height="5" fill="#4e4e4e"/><path d="M904,593.5 V591.5 H908 V593.5" fill="none" stroke="#4e4e4e" stroke-width="1"/>
<rect x="913" y="574.5" width="105.5" height="26.5" fill="#484848"/>
<rect x="1018.5" y="574.5" width="5.5" height="26.5" fill="#3a3a3a"/>
<rect x="896.5" y="600" width="127.5" height="1.3" fill="#1e1e1e"/>
<rect x="913.5" y="576.5" width="61" height="24.5" fill="#262626"/>
<rect x="915" y="578.0" width="58.3" height="23.0" fill="#f2f2f2"/>
<svg x="974" y="574.5" width="26" height="23.0" viewBox="974 574.5 26 23.0">
<text x="976.5" y="591.45" font-family="Liberation Sans" font-size="9.6" fill="#bcbcbc">BG</text>
</svg>
<g fill="none" stroke="#8c8c8c" stroke-width="0.85"><circle cx="1004" cy="582.75" r="1.9"/><ellipse cx="1004" cy="587.75" rx="1.4" ry="2.4"/><path d="M1001.4,586.75 H1006.6 M1003.2,590.05 L1001.6,594.25 M1004.8,590.05 L1006.4,594.25 M1001,594.25 H1007"/></g>
<path d="M941.5,120 L940.5,151" stroke="#c4c4c4" stroke-width="0.8"/>
<path d="M935.4,159.4 L955.3,160.5 L953.2,188.7 L932.3,187.6 Z" fill="#c4c4c4"/><path d="M944,168 L943.5,188" stroke="#aaa" stroke-width="0.6"/>
<path d="M917,212 H971" stroke="#cfcfcf" stroke-width="1.2"/><circle cx="937" cy="212" r="1.5" fill="none" stroke="#aaa" stroke-width="0.8"/>
<path d="M917,252 H971" stroke="#b8b8b8" stroke-width="1.6"/><path d="M937,248 v7" stroke="#aaa" stroke-width="1.4"/>
<path d="M942,277 L940,308" stroke="#bcbcbc" stroke-width="0.7"/>
<rect x="940" y="322" width="5" height="22" fill="#ffffff"/>
<path d="M918,370 H971" stroke="#b0b0b0" stroke-width="1"/><ellipse cx="934" cy="369" rx="2.2" ry="3" fill="#888"/>
<path d="M917,409 H971" stroke="#ffffff" stroke-width="1.6"/><path d="M934,404 v9" stroke="#fff" stroke-width="2"/>
<path d="M935,436 C930,445 932,455 940,461 M938,434 C948,434 954,445 955,462 M933,446 C936,444 940,446 941,450 M944,444 L946,460" fill="none" stroke="#8ab0c0" stroke-width="0.6"/>
<path d="M935,481 C936,474 946,472 950,478 C955,484 954,494 957,503 H933 C932,497 931,488 935,481 Z" fill="#ffffff"/>
<defs><filter id="bl"><feGaussianBlur stdDeviation="2"/></filter></defs><rect x="933" y="519" width="22" height="14" fill="#8a8a8a" filter="url(#bl)"/>
<path d="M944.5,578 L944,601" stroke="#c4c4c4" stroke-width="0.7"/>
<rect x="893" y="601" width="131" height="22" fill="#484848"/>
<rect x="893" y="601" width="131" height="1.5" fill="#3c3c3c"/>
<rect x="893" y="601" width="3.5" height="22" fill="#545454"/>
<path d="M936,614 L940,607.5 L944,614 Z" fill="#f0d030"/><rect x="944" y="607" width="5" height="5" fill="#2a90e0"/><path d="M940,614 L946,612 L948,618 L942,619 Z" fill="#e02020"/>
<rect x="956.7" y="607" width="12.7" height="10.5" fill="#9fd0f0"/><path d="M956.7,617.5 L961,611 L965,614 L969.4,610 V617.5 Z" fill="#30a040"/>
<rect x="978" y="607" width="6" height="9" fill="#cfe8f0"/><rect x="981" y="609" width="7" height="9" fill="#bde0ee"/>
<path d="M997,608 h5 l1.5,2 h5.5 v8 h-12 Z" fill="#f0b860"/>
<path d="M1018.5,609.5 h6 M1019.5,611 v7.5 h5" fill="none" stroke="#b8b8b8" stroke-width="1.4"/><path d="M1021.5,612 v5" stroke="#b8b8b8" stroke-width="0.8"/>
<g fill="#1a98a8"><circle cx="947.5" cy="617.5" r="2.7"/><circle cx="966.5" cy="617.5" r="2.7"/><circle cx="986.5" cy="617.5" r="2.7"/><circle cx="1006.5" cy="617.5" r="2.7"/></g>
</svg>
<svg class="a" style="left:0;top:623px" width="1024" height="25" viewBox="0 623 1024 25">
<rect x="0" y="623" width="1024" height="25" fill="#494949"/>
<rect x="0" y="623.5" width="1024" height="1" fill="#5c5c5c"/>
<rect x="0" y="646.8" width="1024" height="1.2" fill="#626262"/>
<rect x="7.5" y="632" width="8" height="8.5" fill="#d8d8d8"/><rect x="13" y="630" width="5" height="6" fill="none" stroke="#9a9a9a" stroke-width="0.8"/>
<g font-family="Liberation Sans" font-size="7.3" fill="#bdbdbd">
<text x="33.6" y="638.2">Project</text><text x="91.4" y="638.2">184%</text><text x="136" y="638.2">BG_2</text><text x="511.5" y="638.2">Brush</text><text x="911" y="638.2">-7.83;-1.66</text>
</g>
<path d="M62,643.4 L66.4,639.5 L66.4,643.4 Z M121,643.4 L125.8,639.5 L125.8,643.4 Z" fill="#d0d0d0"/>
<rect x="1017.3" y="627" width="1" height="19" fill="#626262"/><rect x="1018.3" y="627" width="1" height="19" fill="#303030"/>
</svg>
<svg class="a" style="left:0;top:648px" width="1024" height="212" viewBox="0 648 1024 212">
<rect x="0" y="648" width="1024" height="212" fill="#474747"/>
<rect x="0" y="648" width="1024" height="8.7" fill="#575757"/>
<path d="M511.5,649.5 V656 M524.7,649.5 V656 M539.3,649.5 V656" stroke="#bbb" stroke-width="0.9"/>
<path d="M515.5,654.5 L519,651 L522.5,654.5 M528.5,651.5 L532,655 L535.5,651.5" fill="none" stroke="#e0e0e0" stroke-width="1.5"/>
<rect x="0" y="656.7" width="1024" height="3.6" fill="#8a3540"/>
<rect x="0" y="660.3" width="1024" height="18.7" fill="#474747"/>
<rect x="0" y="678.8" width="1024" height="1.2" fill="#7a7a7a"/>
<rect x="8.68" y="680" width="1" height="4.5" fill="#7c7c7c"/>
<rect x="18.67" y="680" width="1" height="4.5" fill="#7c7c7c"/>
<rect x="28.65" y="680" width="1" height="4.5" fill="#7c7c7c"/>
<rect x="38.63" y="680" width="1" height="4.5" fill="#7c7c7c"/>
<rect x="48.62" y="680" width="1" height="4.5" fill="#7c7c7c"/>
<rect x="58.61" y="680" width="1" height="4.5" fill="#7c7c7c"/>
<rect x="68.59" y="680" width="1" height="4.5" fill="#7c7c7c"/>
<rect x="78.57" y="680" width="1" height="4.5" fill="#7c7c7c"/>
<rect x="88.56" y="680" width="1" height="4.5" fill="#7c7c7c"/>
<rect x="98.55" y="680" width="1" height="4.5" fill="#7c7c7c"/>
<rect x="108.53" y="680" width="1" height="4.5" fill="#7c7c7c"/>
<rect x="118.51" y="680" width="1" height="4.5" fill="#7c7c7c"/>
<rect x="128.50" y="680" width="1" height="4.5" fill="#7c7c7c"/>
<rect x="138.49" y="680" width="1" height="4.5" fill="#7c7c7c"/>
<rect x="148.47" y="680" width="1" height="4.5" fill="#7c7c7c"/>
<rect x="158.45" y="680" width="1" height="4.5" fill="#7c7c7c"/>
<rect x="168.44" y="680" width="1" height="4.5" fill="#7c7c7c"/>
<rect x="178.43" y="680" width="1" height="4.5" fill="#7c7c7c"/>
<rect x="188.41" y="680" width="1" height="4.5" fill="#7c7c7c"/>
<rect x="198.39" y="680" width="1" height="4.5" fill="#7c7c7c"/>
<rect x="208.38" y="680" width="1" height="4.5" fill="#7c7c7c"/>
<rect x="218.37" y="680" width="1" height="4.5" fill="#7c7c7c"/>
<rect x="228.35" y="680" width="1" height="4.5" fill="#7c7c7c"/>
<rect x="238.33" y="680" width="1" height="4.5" fill="#7c7c7c"/>
<rect x="248.32" y="680" width="1" height="4.5" fill="#7c7c7c"/>
<rect x="258.31" y="680" width="1" height="4.5" fill="#7c7c7c"/>
<rect x="268.29" y="680" width="1" height="4.5" fill="#7c7c7c"/>
<rect x="278.27" y="680" width="1" height="4.5" fill="#7c7c7c"/>
<rect x="288.26" y="680" width="1" height="4.5" fill="#7c7c7c"/>
<rect x="298.25" y="680" width="1" height="4.5" fill="#7c7c7c"/>
<rect x="308.23" y="680" width="1" height="4.5" fill="#7c7c7c"/>
<rect x="318.21" y="680" width="1" height="4.5" fill="#7c7c7c"/>
<rect x="328.20" y="680" width="1" height="8" fill="#7c7c7c"/>
<rect x="338.19" y="680" width="1" height="4.5" fill="#7c7c7c"/>
<rect x="348.17" y="680" width="1" height="4.5" fill="#7c7c7c"/>
<rect x="358.15" y="680" width="1" height="4.5" fill="#7c7c7c"/>
<rect x="368.14" y="680" width="1" height="4.5" fill="#7c7c7c"/>
<rect x="378.12" y="680" width="1" height="4.5" fill="#7c7c7c"/>
<rect x="388.11" y="680" width="1" height="4.5" fill="#7c7c7c"/>
<rect x="398.09" y="680" width="1" height="4.5" fill="#7c7c7c"/>
<rect x="408.08" y="680" width="1" height="4.5" fill="#7c7c7c"/>
<rect x="418.06" y="680" width="1" height="4.5" fill="#7c7c7c"/>
<rect x="428.05" y="680" width="1" height="4.5" fill="#7c7c7c"/>
<rect x="438.03" y="680" width="1" height="4.5" fill="#7c7c7c"/>
<rect x="448.02" y="680" width="1" height="4.5" fill="#7c7c7c"/>
<rect x="458.00" y="680" width="1" height="4.5" fill="#7c7c7c"/>
<rect x="467.99" y="680" width="1" height="4.5" fill="#7c7c7c"/>
<rect x="477.97" y="680" width="1" height="4.5" fill="#7c7c7c"/>
<rect x="487.96" y="680" width="1" height="4.5" fill="#7c7c7c"/>
<rect x="497.94" y="680" width="1" height="4.5" fill="#7c7c7c"/>
<rect x="507.93" y="680" width="1" height="4.5" fill="#7c7c7c"/>
<rect x="517.91" y="680" width="1" height="4.5" fill="#7c7c7c"/>
<rect x="527.90" y="680" width="1" height="4.5" fill="#7c7c7c"/>
<rect x="537.88" y="680" width="1" height="4.5" fill="#7c7c7c"/>
<rect x="547.87" y="680" width="1" height="4.5" fill="#7c7c7c"/>
<rect x="557.86" y="680" width="1" height="4.5" fill="#7c7c7c"/>
<rect x="567.84" y="680" width="1" height="4.5" fill="#7c7c7c"/>
<rect x="577.83" y="680" width="1" height="4.5" fill="#7c7c7c"/>
<rect x="587.81" y="680" width="1" height="4.5" fill="#7c7c7c"/>
<rect x="597.79" y="680" width="1" height="4.5" fill="#7c7c7c"/>
<rect x="607.78" y="680" width="1" height="4.5" fill="#7c7c7c"/>
<rect x="617.76" y="680" width="1" height="4.5" fill="#7c7c7c"/>
<rect x="627.75" y="680" width="1" height="4.5" fill="#7c7c7c"/>
<rect x="637.73" y="680" width="1" height="4.5" fill="#7c7c7c"/>
<rect x="647.72" y="680" width="1" height="4.5" fill="#7c7c7c"/>
<rect x="657.70" y="680" width="1" height="4.5" fill="#7c7c7c"/>
<rect x="667.69" y="680" width="1" height="4.5" fill="#7c7c7c"/>
<rect x="677.67" y="680" width="1" height="4.5" fill="#7c7c7c"/>
<rect x="687.66" y="680" width="1" height="4.5" fill="#7c7c7c"/>
<rect x="697.64" y="680" width="1" height="4.5" fill="#7c7c7c"/>
<rect x="707.63" y="680" width="1" height="4.5" fill="#7c7c7c"/>
<rect x="717.62" y="680" width="1" height="4.5" fill="#7c7c7c"/>
<rect x="727.60" y="680" width="1" height="4.5" fill="#7c7c7c"/>
<rect x="737.59" y="680" width="1" height="4.5" fill="#7c7c7c"/>
<rect x="747.57" y="680" width="1" height="4.5" fill="#7c7c7c"/>
<rect x="757.55" y="680" width="1" height="4.5" fill="#7c7c7c"/>
<rect x="767.54" y="680" width="1" height="4.5" fill="#7c7c7c"/>
<rect x="777.52" y="680" width="1" height="4.5" fill="#7c7c7c"/>
<rect x="787.51" y="680" width="1" height="4.5" fill="#7c7c7c"/>
<rect x="797.49" y="680" width="1" height="4.5" fill="#7c7c7c"/>
<rect x="807.48" y="680" width="1" height="8" fill="#7c7c7c"/>
<rect x="817.46" y="680" width="1" height="4.5" fill="#7c7c7c"/>
<rect x="827.45" y="680" width="1" height="4.5" fill="#7c7c7c"/>
<rect x="837.43" y="680" width="1" height="4.5" fill="#7c7c7c"/>
<rect x="847.42" y="680" width="1" height="4.5" fill="#7c7c7c"/>
<rect x="857.40" y="680" width="1" height="4.5" fill="#7c7c7c"/>
<rect x="867.39" y="680" width="1" height="4.5" fill="#7c7c7c"/>
<rect x="877.38" y="680" width="1" height="4.5" fill="#7c7c7c"/>
<rect x="887.36" y="680" width="1" height="4.5" fill="#7c7c7c"/>
<rect x="897.35" y="680" width="1" height="4.5" fill="#7c7c7c"/>
<rect x="907.33" y="680" width="1" height="4.5" fill="#7c7c7c"/>
<rect x="917.32" y="680" width="1" height="4.5" fill="#7c7c7c"/>
<rect x="927.30" y="680" width="1" height="4.5" fill="#7c7c7c"/>
<rect x="937.28" y="680" width="1" height="4.5" fill="#7c7c7c"/>
<rect x="947.27" y="680" width="1" height="4.5" fill="#7c7c7c"/>
<rect x="957.25" y="680" width="1" height="4.5" fill="#7c7c7c"/>
<rect x="967.24" y="680" width="1" height="4.5" fill="#7c7c7c"/>
<rect x="977.22" y="680" width="1" height="4.5" fill="#7c7c7c"/>
<rect x="987.21" y="680" width="1" height="4.5" fill="#7c7c7c"/>
<rect x="997.19" y="680" width="1" height="4.5" fill="#7c7c7c"/>
<rect x="1007.18" y="680" width="1" height="4.5" fill="#7c7c7c"/>
<rect x="1017.16" y="680" width="1" height="4.5" fill="#7c7c7c"/>
<g font-family="Liberation Sans" font-size="9.3" fill="#8e8e8e" text-anchor="middle"><text x="328.5" y="700.3">00:02:40:00</text><text x="808.5" y="700.3">00:03:20:00</text></g>
<rect x="0" y="711" width="1024" height="1.2" fill="#2c2c2c"/>
<rect x="0" y="712.2" width="1024" height="19.5" fill="#4e4e4e"/>
<rect x="156.55" y="713.7" width="26.15" height="15.6" rx="4" fill="#262626" stroke="#141414" stroke-width="0.8"/>
<path d="M157.25,718.5 L160.25,721.5 L157.25,724.5 Z M182,718.5 L179,721.5 L182,724.5 Z" fill="#8a8a8a"/>
<rect x="254.05" y="713.7" width="20.65" height="15.6" rx="4" fill="#262626" stroke="#141414" stroke-width="0.8"/>
<path d="M254.75,718.5 L257.75,721.5 L254.75,724.5 Z M274,718.5 L271,721.5 L274,724.5 Z" fill="#8a8a8a"/>
<rect x="275.3" y="713.7" width="38.9" height="15.6" rx="4" fill="#262626" stroke="#141414" stroke-width="0.8"/>
<path d="M276,718.5 L279,721.5 L276,724.5 Z M313.5,718.5 L310.5,721.5 L313.5,724.5 Z" fill="#8a8a8a"/>
<rect x="341.3" y="713.7" width="68.4" height="15.6" rx="4" fill="#262626" stroke="#141414" stroke-width="0.8"/>
<path d="M342,718.5 L345,721.5 L342,724.5 Z M409,718.5 L406,721.5 L409,724.5 Z" fill="#8a8a8a"/>
<rect x="511.3" y="713.7" width="9.4" height="15.6" rx="4" fill="#262626" stroke="#141414" stroke-width="0.8"/>
<path d="M512,718.5 L515,721.5 L512,724.5 Z M520,718.5 L517,721.5 L520,724.5 Z" fill="#8a8a8a"/>
<rect x="565.05" y="713.7" width="10.65" height="15.6" rx="4" fill="#262626" stroke="#141414" stroke-width="0.8"/>
<path d="M565.75,718.5 L568.75,721.5 L565.75,724.5 Z M575,718.5 L572,721.5 L575,724.5 Z" fill="#8a8a8a"/>
<rect x="591.3" y="713.7" width="15.65" height="15.6" rx="4" fill="#262626" stroke="#141414" stroke-width="0.8"/>
<path d="M592,718.5 L595,721.5 L592,724.5 Z M606.25,718.5 L603.25,721.5 L606.25,724.5 Z" fill="#8a8a8a"/>
<rect x="640.05" y="713.7" width="20.65" height="15.6" rx="4" fill="#262626" stroke="#141414" stroke-width="0.8"/>
<path d="M640.75,718.5 L643.75,721.5 L640.75,724.5 Z M660,718.5 L657,721.5 L660,724.5 Z" fill="#8a8a8a"/>
<rect x="712.55" y="713.7" width="14.4" height="15.6" rx="4" fill="#262626" stroke="#141414" stroke-width="0.8"/>
<path d="M713.25,718.5 L716.25,721.5 L713.25,724.5 Z M726.25,718.5 L723.25,721.5 L726.25,724.5 Z" fill="#8a8a8a"/>
<rect x="836.8" y="713.7" width="26.4" height="15.6" rx="4" fill="#262626" stroke="#141414" stroke-width="0.8"/>
<path d="M837.5,718.5 L840.5,721.5 L837.5,724.5 Z M862.5,718.5 L859.5,721.5 L862.5,724.5 Z" fill="#8a8a8a"/>
<rect x="1009.9" y="713.7" width="19.799999999999976" height="15.6" rx="4" fill="#262626" stroke="#141414" stroke-width="0.8"/>
<path d="M1010.6,718.5 L1013.6,721.5 L1010.6,724.5 Z M1029,718.5 L1026,721.5 L1029,724.5 Z" fill="#8a8a8a"/>
<rect x="0" y="731" width="1024" height="1" fill="#5a5a5a"/>
<rect x="0" y="737.5" width="1024" height="43.5" fill="#e3e46b"/>
<rect x="120.00" y="737.5" width="36.00" height="43.5" fill="#8c8c8c"/>
<rect x="218.00" y="737.5" width="15.00" height="43.5" fill="#8c8c8c"/>
<rect x="496.00" y="737.5" width="10.60" height="43.5" fill="#8c8c8c"/>
<rect x="522.40" y="737.5" width="43.00" height="43.5" fill="#8c8c8c"/>
<rect x="576.00" y="737.5" width="15.00" height="43.5" fill="#8c8c8c"/>
<rect x="606.70" y="737.5" width="52.30" height="43.5" fill="#8c8c8c"/>
<rect x="878.00" y="737.5" width="10.00" height="43.5" fill="#8c8c8c"/>
<rect x="72.50" y="737.5" width="4.50" height="43.5" fill="#848550"/>
<rect x="182.00" y="737.5" width="4.00" height="43.5" fill="#848550"/>
<rect x="465.00" y="737.5" width="3.50" height="43.5" fill="#848550"/>
<rect x="473.00" y="737.5" width="4.60" height="43.5" fill="#848550"/>
<rect x="591.00" y="737.5" width="11.40" height="43.5" fill="#848550"/>
<rect x="468.80" y="737.5" width="3.50" height="43.5" fill="#161616"/>
<rect x="0.45" y="737.5" width="1.6" height="43.5" fill="#7f8048"/>
<rect x="4.20" y="737.5" width="1.6" height="43.5" fill="#7f8048"/>
<rect x="6.70" y="737.5" width="1.6" height="43.5" fill="#7f8048"/>
<rect x="11.10" y="737.5" width="1.6" height="43.5" fill="#7f8048"/>
<rect x="16.70" y="737.5" width="1.6" height="43.5" fill="#7f8048"/>
<rect x="35.45" y="737.5" width="1.6" height="43.5" fill="#7f8048"/>
<rect x="37.95" y="737.5" width="1.6" height="43.5" fill="#7f8048"/>
<rect x="41.10" y="737.5" width="1.6" height="43.5" fill="#7f8048"/>
<rect x="45.45" y="737.5" width="1.6" height="43.5" fill="#7f8048"/>
<rect x="47.95" y="737.5" width="1.6" height="43.5" fill="#7f8048"/>
<rect x="52.30" y="737.5" width="1.6" height="43.5" fill="#7f8048"/>
<rect x="56.10" y="737.5" width="1.6" height="43.5" fill="#7f8048"/>
<rect x="63.60" y="737.5" width="1.6" height="43.5" fill="#7f8048"/>
<rect x="68.60" y="737.5" width="1.6" height="43.5" fill="#7f8048"/>
<rect x="79.20" y="737.5" width="1.6" height="43.5" fill="#7f8048"/>
<rect x="87.30" y="737.5" width="1.6" height="43.5" fill="#7f8048"/>
<rect x="91.10" y="737.5" width="1.6" height="43.5" fill="#7f8048"/>
<rect x="94.20" y="737.5" width="1.6" height="43.5" fill="#7f8048"/>
<rect x="101.10" y="737.5" width="1.6" height="43.5" fill="#7f8048"/>
<rect x="107.95" y="737.5" width="1.6" height="43.5" fill="#7f8048"/>
<rect x="111.10" y="737.5" width="1.6" height="43.5" fill="#7f8048"/>
<rect x="114.80" y="737.5" width="1.6" height="43.5" fill="#7f8048"/>
<rect x="117.95" y="737.5" width="1.6" height="43.5" fill="#7f8048"/>
<rect x="159.20" y="737.5" width="1.6" height="43.5" fill="#7f8048"/>
<rect x="163.20" y="737.5" width="1.6" height="43.5" fill="#7f8048"/>
<rect x="166.20" y="737.5" width="1.6" height="43.5" fill="#7f8048"/>
<rect x="169.20" y="737.5" width="1.6" height="43.5" fill="#7f8048"/>
<rect x="172.20" y="737.5" width="1.6" height="43.5" fill="#7f8048"/>
<rect x="175.20" y="737.5" width="1.6" height="43.5" fill="#7f8048"/>
<rect x="179.20" y="737.5" width="1.6" height="43.5" fill="#7f8048"/>
<rect x="190.20" y="737.5" width="1.6" height="43.5" fill="#7f8048"/>
<rect x="197.20" y="737.5" width="1.6" height="43.5" fill="#7f8048"/>
<rect x="202.70" y="737.5" width="1.6" height="43.5" fill="#7f8048"/>
<rect x="210.60" y="737.5" width="1.6" height="43.5" fill="#7f8048"/>
<rect x="213.20" y="737.5" width="1.6" height="43.5" fill="#7f8048"/>
<rect x="249.20" y="737.5" width="1.6" height="43.5" fill="#7f8048"/>
<rect x="253.60" y="737.5" width="1.6" height="43.5" fill="#7f8048"/>
<rect x="256.20" y="737.5" width="1.6" height="43.5" fill="#7f8048"/>
<rect x="259.80" y="737.5" width="1.6" height="43.5" fill="#7f8048"/>
<rect x="263.20" y="737.5" width="1.6" height="43.5" fill="#7f8048"/>
<rect x="268.60" y="737.5" width="1.6" height="43.5" fill="#7f8048"/>
<rect x="273.90" y="737.5" width="1.6" height="43.5" fill="#7f8048"/>
<rect x="280.90" y="737.5" width="1.6" height="43.5" fill="#7f8048"/>
<rect x="284.40" y="737.5" width="1.6" height="43.5" fill="#7f8048"/>
<rect x="312.90" y="737.5" width="1.6" height="43.5" fill="#7f8048"/>
<rect x="315.60" y="737.5" width="1.6" height="43.5" fill="#7f8048"/>
<rect x="341.20" y="737.5" width="1.6" height="43.5" fill="#7f8048"/>
<rect x="349.20" y="737.5" width="1.6" height="43.5" fill="#7f8048"/>
<rect x="355.20" y="737.5" width="1.6" height="43.5" fill="#7f8048"/>
<rect x="382.00" y="737.5" width="1.6" height="43.5" fill="#7f8048"/>
<rect x="399.20" y="737.5" width="1.6" height="43.5" fill="#7f8048"/>
<rect x="408.70" y="737.5" width="1.6" height="43.5" fill="#7f8048"/>
<rect x="436.50" y="737.5" width="1.6" height="43.5" fill="#7f8048"/>
<rect x="490.00" y="737.5" width="1.6" height="43.5" fill="#7f8048"/>
<rect x="569.90" y="737.5" width="1.6" height="43.5" fill="#7f8048"/>
<rect x="663.20" y="737.5" width="1.6" height="43.5" fill="#7f8048"/>
<rect x="668.70" y="737.5" width="1.6" height="43.5" fill="#7f8048"/>
<rect x="679.20" y="737.5" width="1.6" height="43.5" fill="#7f8048"/>
<rect x="689.20" y="737.5" width="1.6" height="43.5" fill="#7f8048"/>
<rect x="697.70" y="737.5" width="1.6" height="43.5" fill="#7f8048"/>
<rect x="707.20" y="737.5" width="1.6" height="43.5" fill="#7f8048"/>
<rect x="712.70" y="737.5" width="1.6" height="43.5" fill="#7f8048"/>
<rect x="718.80" y="737.5" width="1.6" height="43.5" fill="#7f8048"/>
<rect x="721.50" y="737.5" width="1.6" height="43.5" fill="#7f8048"/>
<rect x="725.00" y="737.5" width="1.6" height="43.5" fill="#7f8048"/>
<rect x="727.60" y="737.5" width="1.6" height="43.5" fill="#7f8048"/>
<rect x="731.20" y="737.5" width="1.6" height="43.5" fill="#7f8048"/>
<rect x="734.70" y="737.5" width="1.6" height="43.5" fill="#7f8048"/>
<rect x="739.20" y="737.5" width="1.6" height="43.5" fill="#7f8048"/>
<rect x="743.20" y="737.5" width="1.6" height="43.5" fill="#7f8048"/>
<rect x="748.70" y="737.5" width="1.6" height="43.5" fill="#7f8048"/>
<rect x="754.00" y="737.5" width="1.6" height="43.5" fill="#7f8048"/>
<rect x="759.20" y="737.5" width="1.6" height="43.5" fill="#7f8048"/>
<rect x="765.20" y="737.5" width="1.6" height="43.5" fill="#7f8048"/>
<rect x="771.20" y="737.5" width="1.6" height="43.5" fill="#7f8048"/>
<rect x="776.80" y="737.5" width="1.6" height="43.5" fill="#7f8048"/>
<rect x="783.00" y="737.5" width="1.6" height="43.5" fill="#7f8048"/>
<rect x="789.20" y="737.5" width="1.6" height="43.5" fill="#7f8048"/>
<rect x="795.20" y="737.5" width="1.6" height="43.5" fill="#7f8048"/>
<rect x="805.20" y="737.5" width="1.6" height="43.5" fill="#7f8048"/>
<rect x="815.20" y="737.5" width="1.6" height="43.5" fill="#7f8048"/>
<rect x="817.70" y="737.5" width="1.6" height="43.5" fill="#7f8048"/>
<rect x="822.20" y="737.5" width="1.6" height="43.5" fill="#7f8048"/>
<rect x="836.20" y="737.5" width="1.6" height="43.5" fill="#7f8048"/>
<rect x="863.20" y="737.5" width="1.6" height="43.5" fill="#7f8048"/>
<rect x="866.90" y="737.5" width="1.6" height="43.5" fill="#7f8048"/>
<rect x="869.20" y="737.5" width="1.6" height="43.5" fill="#7f8048"/>
<rect x="872.20" y="737.5" width="1.6" height="43.5" fill="#7f8048"/>
<rect x="892.60" y="737.5" width="1.6" height="43.5" fill="#7f8048"/>
<rect x="901.70" y="737.5" width="1.6" height="43.5" fill="#7f8048"/>
<rect x="904.50" y="737.5" width="1.6" height="43.5" fill="#7f8048"/>
<rect x="908.70" y="737.5" width="1.6" height="43.5" fill="#7f8048"/>
<rect x="917.90" y="737.5" width="1.6" height="43.5" fill="#7f8048"/>
<rect x="928.40" y="737.5" width="1.6" height="43.5" fill="#7f8048"/>
<rect x="945.20" y="737.5" width="1.6" height="43.5" fill="#7f8048"/>
<rect x="953.70" y="737.5" width="1.6" height="43.5" fill="#7f8048"/>
<rect x="955.90" y="737.5" width="1.6" height="43.5" fill="#7f8048"/>
<rect x="958.70" y="737.5" width="1.6" height="43.5" fill="#7f8048"/>
<rect x="963.60" y="737.5" width="1.6" height="43.5" fill="#7f8048"/>
<rect x="968.50" y="737.5" width="1.6" height="43.5" fill="#7f8048"/>
<rect x="975.50" y="737.5" width="1.6" height="43.5" fill="#7f8048"/>
<rect x="981.90" y="737.5" width="1.6" height="43.5" fill="#7f8048"/>
<rect x="986.10" y="737.5" width="1.6" height="43.5" fill="#7f8048"/>
<rect x="988.90" y="737.5" width="1.6" height="43.5" fill="#7f8048"/>
<rect x="998.70" y="737.5" width="1.6" height="43.5" fill="#7f8048"/>
<rect x="1010.00" y="737.5" width="1.6" height="43.5" fill="#7f8048"/>
<rect x="1020.50" y="737.5" width="1.6" height="43.5" fill="#7f8048"/>
<rect x="127.30" y="737.5" width="1.4" height="43.5" fill="#626262"/>
<rect x="139.30" y="737.5" width="1.4" height="43.5" fill="#626262"/>
<rect x="148.30" y="737.5" width="1.4" height="43.5" fill="#626262"/>
<rect x="223.90" y="737.5" width="1.4" height="43.5" fill="#626262"/>
<rect x="499.80" y="737.5" width="1.4" height="43.5" fill="#626262"/>
<rect x="523.30" y="737.5" width="1.4" height="43.5" fill="#626262"/>
<rect x="530.30" y="737.5" width="1.4" height="43.5" fill="#626262"/>
<rect x="542.80" y="737.5" width="1.4" height="43.5" fill="#626262"/>
<rect x="549.80" y="737.5" width="1.4" height="43.5" fill="#626262"/>
<rect x="556.80" y="737.5" width="1.4" height="43.5" fill="#626262"/>
<rect x="577.30" y="737.5" width="1.4" height="43.5" fill="#626262"/>
<rect x="581.30" y="737.5" width="1.4" height="43.5" fill="#626262"/>
<rect x="584.80" y="737.5" width="1.4" height="43.5" fill="#626262"/>
<rect x="588.30" y="737.5" width="1.4" height="43.5" fill="#626262"/>
<rect x="609.30" y="737.5" width="1.4" height="43.5" fill="#626262"/>
<rect x="613.30" y="737.5" width="1.4" height="43.5" fill="#626262"/>
<rect x="617.30" y="737.5" width="1.4" height="43.5" fill="#626262"/>
<rect x="621.30" y="737.5" width="1.4" height="43.5" fill="#626262"/>
<rect x="625.30" y="737.5" width="1.4" height="43.5" fill="#626262"/>
<rect x="629.30" y="737.5" width="1.4" height="43.5" fill="#626262"/>
<rect x="633.30" y="737.5" width="1.4" height="43.5" fill="#626262"/>
<rect x="637.30" y="737.5" width="1.4" height="43.5" fill="#626262"/>
<rect x="641.30" y="737.5" width="1.4" height="43.5" fill="#626262"/>
<rect x="645.10" y="737.5" width="1.4" height="43.5" fill="#626262"/>
<rect x="882.30" y="737.5" width="1.4" height="43.5" fill="#626262"/>
<rect x="60.50" y="737.5" width="1.5" height="43.5" fill="#161616"/>
<rect x="81.75" y="737.5" width="1.5" height="43.5" fill="#161616"/>
<rect x="103.65" y="737.5" width="1.5" height="43.5" fill="#161616"/>
<rect x="464.75" y="737.5" width="1.5" height="43.5" fill="#161616"/>
<rect x="22" y="753.5" width="13" height="12.3" fill="#e9e9f0"/>
<path d="M25,764 C27,758 31,757 33,763" fill="none" stroke="#9a9aa8" stroke-width="0.9"/>
<rect x="291" y="753.5" width="18" height="12.3" fill="#e9e9f0"/>
<path d="M294,764 C296,758 300,757 302,763" fill="none" stroke="#9a9aa8" stroke-width="0.9"/>
<rect x="320.8" y="753.5" width="19.19999999999999" height="12.3" fill="#e9e9f0"/>
<path d="M323.8,764 C325.8,758 329.8,757 331.8,763" fill="none" stroke="#9a9aa8" stroke-width="0.9"/>
<rect x="360" y="753.5" width="19.600000000000023" height="12.3" fill="#e9e9f0"/>
<path d="M363,764 C365,758 369,757 371,763" fill="none" stroke="#9a9aa8" stroke-width="0.9"/>
<rect x="415.7" y="753.5" width="17.30000000000001" height="12.3" fill="#e9e9f0"/>
<path d="M418.7,764 C420.7,758 424.7,757 426.7,763" fill="none" stroke="#9a9aa8" stroke-width="0.9"/>
<rect x="442" y="753.5" width="19" height="12.3" fill="#e9e9f0"/>
<path d="M445,764 C447,758 451,757 453,763" fill="none" stroke="#9a9aa8" stroke-width="0.9"/>
<rect x="841.3" y="753.5" width="19.3" height="12.3" fill="#a59ea6"/><path d="M846,765 L851,755 L856,765 Z" fill="#f4f4f4"/>
<rect x="238" y="757" width="6" height="5" fill="#f0eef0"/>
<rect x="388" y="757" width="6" height="5" fill="#f0eef0"/>
<rect x="481.6" y="757" width="6" height="5" fill="#f0eef0"/>
<rect x="512.4" y="757" width="6" height="5" fill="#f0eef0"/>
<rect x="827" y="757" width="6" height="5" fill="#f0eef0"/>
<rect x="934.7" y="757" width="6" height="5" fill="#f0eef0"/>
<rect x="1002" y="757" width="6" height="5" fill="#f0eef0"/>
<rect x="1014.8" y="757" width="6" height="5" fill="#f0eef0"/>
<path d="M134,755 L138,762 L130,762 Z" fill="#f0f0f0"/><rect x="130" y="755" width="8" height="7" fill="none" stroke="#8a4a4a" stroke-width="0.8"/>
<path d="M537.3,755 L541.5,762 L533,762 Z" fill="#f4f4f4"/>
<rect x="648.8" y="757" width="8" height="5" fill="#f0f0f0"/>
<rect x="0" y="732" width="58" height="5.5" fill="#6c6c6c"/>
<rect x="0" y="781" width="58" height="4.3" fill="#6c6c6c"/>
<rect x="58" y="732" width="17" height="5.5" fill="#262626"/>
<rect x="58" y="781" width="17" height="4.3" fill="#262626"/>
<rect x="75" y="732" width="44" height="5.5" fill="#6c6c6c"/>
<rect x="75" y="781" width="44" height="4.3" fill="#6c6c6c"/>
<rect x="119" y="732" width="38" height="5.5" fill="#262626"/>
<rect x="119" y="781" width="38" height="4.3" fill="#262626"/>
<rect x="157" y="732" width="26" height="5.5" fill="#6c6c6c"/>
<rect x="157" y="781" width="26" height="4.3" fill="#6c6c6c"/>
<rect x="183" y="732" width="35" height="5.5" fill="#262626"/>
<rect x="183" y="781" width="35" height="4.3" fill="#262626"/>
<rect x="218" y="732" width="15" height="5.5" fill="#6c6c6c"/>
<rect x="218" y="781" width="15" height="4.3" fill="#6c6c6c"/>
<rect x="233" y="732" width="21" height="5.5" fill="#262626"/>
<rect x="233" y="781" width="21" height="4.3" fill="#262626"/>
<rect x="254" y="732" width="22.399999999999977" height="5.5" fill="#6c6c6c"/>
<rect x="254" y="781" width="22.399999999999977" height="4.3" fill="#6c6c6c"/>
<rect x="276.4" y="732" width="36.60000000000002" height="5.5" fill="#262626"/>
<rect x="276.4" y="781" width="36.60000000000002" height="4.3" fill="#262626"/>
<rect x="313" y="732" width="29" height="5.5" fill="#6c6c6c"/>
<rect x="313" y="781" width="29" height="4.3" fill="#6c6c6c"/>
<rect x="342" y="732" width="123" height="5.5" fill="#262626"/>
<rect x="342" y="781" width="123" height="4.3" fill="#262626"/>
<rect x="465" y="732" width="100.39999999999998" height="5.5" fill="#6c6c6c"/>
<rect x="465" y="781" width="100.39999999999998" height="4.3" fill="#6c6c6c"/>
<rect x="565.4" y="732" width="10.600000000000023" height="5.5" fill="#262626"/>
<rect x="565.4" y="781" width="10.600000000000023" height="4.3" fill="#262626"/>
<rect x="576" y="732" width="15" height="5.5" fill="#6c6c6c"/>
<rect x="576" y="781" width="15" height="4.3" fill="#6c6c6c"/>
<rect x="591" y="732" width="15" height="5.5" fill="#262626"/>
<rect x="591" y="781" width="15" height="4.3" fill="#262626"/>
<rect x="606" y="732" width="17.399999999999977" height="5.5" fill="#6c6c6c"/>
<rect x="606" y="781" width="17.399999999999977" height="4.3" fill="#6c6c6c"/>
<rect x="623.4" y="732" width="36.60000000000002" height="5.5" fill="#262626"/>
<rect x="623.4" y="781" width="36.60000000000002" height="4.3" fill="#262626"/>
<rect x="660" y="732" width="39.39999999999998" height="5.5" fill="#6c6c6c"/>
<rect x="660" y="781" width="39.39999999999998" height="4.3" fill="#6c6c6c"/>
<rect x="699.4" y="732" width="20.200000000000045" height="5.5" fill="#262626"/>
<rect x="699.4" y="781" width="20.200000000000045" height="4.3" fill="#262626"/>
<rect x="719.6" y="732" width="24.600000000000023" height="5.5" fill="#6c6c6c"/>
<rect x="719.6" y="781" width="24.600000000000023" height="4.3" fill="#6c6c6c"/>
<rect x="744.2" y="732" width="92.79999999999995" height="5.5" fill="#262626"/>
<rect x="744.2" y="781" width="92.79999999999995" height="4.3" fill="#262626"/>
<rect x="837" y="732" width="26.299999999999955" height="5.5" fill="#6c6c6c"/>
<rect x="837" y="781" width="26.299999999999955" height="4.3" fill="#6c6c6c"/>
<rect x="863.3" y="732" width="10.5" height="5.5" fill="#262626"/>
<rect x="863.3" y="781" width="10.5" height="4.3" fill="#262626"/>
<rect x="873.8" y="732" width="4.400000000000091" height="5.5" fill="#6c6c6c"/>
<rect x="873.8" y="781" width="4.400000000000091" height="4.3" fill="#6c6c6c"/>
<rect x="878.2" y="732" width="10.399999999999977" height="5.5" fill="#262626"/>
<rect x="878.2" y="781" width="10.399999999999977" height="4.3" fill="#262626"/>
<rect x="888.6" y="732" width="21.0" height="5.5" fill="#6c6c6c"/>
<rect x="888.6" y="781" width="21.0" height="4.3" fill="#6c6c6c"/>
<rect x="909.6" y="732" width="45.0" height="5.5" fill="#262626"/>
<rect x="909.6" y="781" width="45.0" height="4.3" fill="#262626"/>
<rect x="954.6" y="732" width="66.0" height="5.5" fill="#6c6c6c"/>
<rect x="954.6" y="781" width="66.0" height="4.3" fill="#6c6c6c"/>
<rect x="1020.6" y="732" width="3.3999999999999773" height="5.5" fill="#262626"/>
<rect x="1020.6" y="781" width="3.3999999999999773" height="4.3" fill="#262626"/>
<rect x="0" y="785" width="1024" height="1" fill="#9a9a9a"/>
<path d="M52.5,732.3 Q57.2,732.5 58,737.2 Q58.8,732.5 63.5,732.3" fill="none" stroke="#c8c8c8" stroke-width="0.9"/>
<path d="M52.5,785.5 Q57.2,785.3 58,781 Q58.8,785.3 63.5,785.5 Z" fill="#262626" stroke="#c8c8c8" stroke-width="0.9"/>
<path d="M69.5,732.3 Q74.2,732.5 75,737.2 Q75.8,732.5 80.5,732.3" fill="none" stroke="#c8c8c8" stroke-width="0.9"/>
<path d="M69.5,785.5 Q74.2,785.3 75,781 Q75.8,785.3 80.5,785.5 Z" fill="#262626" stroke="#c8c8c8" stroke-width="0.9"/>
<path d="M113.5,732.3 Q118.2,732.5 119,737.2 Q119.8,732.5 124.5,732.3" fill="none" stroke="#c8c8c8" stroke-width="0.9"/>
<path d="M113.5,785.5 Q118.2,785.3 119,781 Q119.8,785.3 124.5,785.5 Z" fill="#262626" stroke="#c8c8c8" stroke-width="0.9"/>
<path d="M151.5,732.3 Q156.2,732.5 157,737.2 Q157.8,732.5 162.5,732.3" fill="none" stroke="#c8c8c8" stroke-width="0.9"/>
<path d="M151.5,785.5 Q156.2,785.3 157,781 Q157.8,785.3 162.5,785.5 Z" fill="#262626" stroke="#c8c8c8" stroke-width="0.9"/>
<path d="M177.5,732.3 Q182.2,732.5 183,737.2 Q183.8,732.5 188.5,732.3" fill="none" stroke="#c8c8c8" stroke-width="0.9"/>
<path d="M177.5,785.5 Q182.2,785.3 183,781 Q183.8,785.3 188.5,785.5 Z" fill="#262626" stroke="#c8c8c8" stroke-width="0.9"/>
<path d="M212.5,732.3 Q217.2,732.5 218,737.2 Q218.8,732.5 223.5,732.3" fill="none" stroke="#c8c8c8" stroke-width="0.9"/>
<path d="M212.5,785.5 Q217.2,785.3 218,781 Q218.8,785.3 223.5,785.5 Z" fill="#262626" stroke="#c8c8c8" stroke-width="0.9"/>
<path d="M227.5,732.3 Q232.2,732.5 233,737.2 Q233.8,732.5 238.5,732.3" fill="none" stroke="#c8c8c8" stroke-width="0.9"/>
<path d="M227.5,785.5 Q232.2,785.3 233,781 Q233.8,785.3 238.5,785.5 Z" fill="#262626" stroke="#c8c8c8" stroke-width="0.9"/>
<path d="M248.5,732.3 Q253.2,732.5 254,737.2 Q254.8,732.5 259.5,732.3" fill="none" stroke="#c8c8c8" stroke-width="0.9"/>
<path d="M248.5,785.5 Q253.2,785.3 254,781 Q254.8,785.3 259.5,785.5 Z" fill="#262626" stroke="#c8c8c8" stroke-width="0.9"/>
<path d="M270.9,732.3 Q275.59999999999997,732.5 276.4,737.2 Q277.2,732.5 281.9,732.3" fill="none" stroke="#c8c8c8" stroke-width="0.9"/>
<path d="M270.9,785.5 Q275.59999999999997,785.3 276.4,781 Q277.2,785.3 281.9,785.5 Z" fill="#262626" stroke="#c8c8c8" stroke-width="0.9"/>
<path d="M307.5,732.3 Q312.2,732.5 313,737.2 Q313.8,732.5 318.5,732.3" fill="none" stroke="#c8c8c8" stroke-width="0.9"/>
<path d="M307.5,785.5 Q312.2,785.3 313,781 Q313.8,785.3 318.5,785.5 Z" fill="#262626" stroke="#c8c8c8" stroke-width="0.9"/>
<path d="M336.5,732.3 Q341.2,732.5 342,737.2 Q342.8,732.5 347.5,732.3" fill="none" stroke="#c8c8c8" stroke-width="0.9"/>
<path d="M336.5,785.5 Q341.2,785.3 342,781 Q342.8,785.3 347.5,785.5 Z" fill="#262626" stroke="#c8c8c8" stroke-width="0.9"/>
<path d="M459.5,732.3 Q464.2,732.5 465,737.2 Q465.8,732.5 470.5,732.3" fill="none" stroke="#c8c8c8" stroke-width="0.9"/>
<path d="M459.5,785.5 Q464.2,785.3 465,781 Q465.8,785.3 470.5,785.5 Z" fill="#262626" stroke="#c8c8c8" stroke-width="0.9"/>
<path d="M559.9,732.3 Q564.6,732.5 565.4,737.2 Q566.1999999999999,732.5 570.9,732.3" fill="none" stroke="#c8c8c8" stroke-width="0.9"/>
<path d="M559.9,785.5 Q564.6,785.3 565.4,781 Q566.1999999999999,785.3 570.9,785.5 Z" fill="#262626" stroke="#c8c8c8" stroke-width="0.9"/>
<path d="M570.5,732.3 Q575.2,732.5 576,737.2 Q576.8,732.5 581.5,732.3" fill="none" stroke="#c8c8c8" stroke-width="0.9"/>
<path d="M570.5,785.5 Q575.2,785.3 576,781 Q576.8,785.3 581.5,785.5 Z" fill="#262626" stroke="#c8c8c8" stroke-width="0.9"/>
<path d="M585.5,732.3 Q590.2,732.5 591,737.2 Q591.8,732.5 596.5,732.3" fill="none" stroke="#c8c8c8" stroke-width="0.9"/>
<path d="M585.5,785.5 Q590.2,785.3 591,781 Q591.8,785.3 596.5,785.5 Z" fill="#262626" stroke="#c8c8c8" stroke-width="0.9"/>
<path d="M600.5,732.3 Q605.2,732.5 606,737.2 Q606.8,732.5 611.5,732.3" fill="none" stroke="#c8c8c8" stroke-width="0.9"/>
<path d="M600.5,785.5 Q605.2,785.3 606,781 Q606.8,785.3 611.5,785.5 Z" fill="#262626" stroke="#c8c8c8" stroke-width="0.9"/>
<path d="M617.9,732.3 Q622.6,732.5 623.4,737.2 Q624.1999999999999,732.5 628.9,732.3" fill="none" stroke="#c8c8c8" stroke-width="0.9"/>
<path d="M617.9,785.5 Q622.6,785.3 623.4,781 Q624.1999999999999,785.3 628.9,785.5 Z" fill="#262626" stroke="#c8c8c8" stroke-width="0.9"/>
<path d="M654.5,732.3 Q659.2,732.5 660,737.2 Q660.8,732.5 665.5,732.3" fill="none" stroke="#c8c8c8" stroke-width="0.9"/>
<path d="M654.5,785.5 Q659.2,785.3 660,781 Q660.8,785.3 665.5,785.5 Z" fill="#262626" stroke="#c8c8c8" stroke-width="0.9"/>
<path d="M693.9,732.3 Q698.6,732.5 699.4,737.2 Q700.1999999999999,732.5 704.9,732.3" fill="none" stroke="#c8c8c8" stroke-width="0.9"/>
<path d="M693.9,785.5 Q698.6,785.3 699.4,781 Q700.1999999999999,785.3 704.9,785.5 Z" fill="#262626" stroke="#c8c8c8" stroke-width="0.9"/>
<path d="M714.1,732.3 Q718.8000000000001,732.5 719.6,737.2 Q720.4,732.5 725.1,732.3" fill="none" stroke="#c8c8c8" stroke-width="0.9"/>
<path d="M714.1,785.5 Q718.8000000000001,785.3 719.6,781 Q720.4,785.3 725.1,785.5 Z" fill="#262626" stroke="#c8c8c8" stroke-width="0.9"/>
<path d="M738.7,732.3 Q743.4000000000001,732.5 744.2,737.2 Q745.0,732.5 749.7,732.3" fill="none" stroke="#c8c8c8" stroke-width="0.9"/>
<path d="M738.7,785.5 Q743.4000000000001,785.3 744.2,781 Q745.0,785.3 749.7,785.5 Z" fill="#262626" stroke="#c8c8c8" stroke-width="0.9"/>
<path d="M831.5,732.3 Q836.2,732.5 837,737.2 Q837.8,732.5 842.5,732.3" fill="none" stroke="#c8c8c8" stroke-width="0.9"/>
<path d="M831.5,785.5 Q836.2,785.3 837,781 Q837.8,785.3 842.5,785.5 Z" fill="#262626" stroke="#c8c8c8" stroke-width="0.9"/>
<path d="M857.8,732.3 Q862.5,732.5 863.3,737.2 Q864.0999999999999,732.5 868.8,732.3" fill="none" stroke="#c8c8c8" stroke-width="0.9"/>
<path d="M857.8,785.5 Q862.5,785.3 863.3,781 Q864.0999999999999,785.3 868.8,785.5 Z" fill="#262626" stroke="#c8c8c8" stroke-width="0.9"/>
<path d="M868.3,732.3 Q873.0,732.5 873.8,737.2 Q874.5999999999999,732.5 879.3,732.3" fill="none" stroke="#c8c8c8" stroke-width="0.9"/>
<path d="M868.3,785.5 Q873.0,785.3 873.8,781 Q874.5999999999999,785.3 879.3,785.5 Z" fill="#262626" stroke="#c8c8c8" stroke-width="0.9"/>
<path d="M872.7,732.3 Q877.4000000000001,732.5 878.2,737.2 Q879.0,732.5 883.7,732.3" fill="none" stroke="#c8c8c8" stroke-width="0.9"/>
<path d="M872.7,785.5 Q877.4000000000001,785.3 878.2,781 Q879.0,785.3 883.7,785.5 Z" fill="#262626" stroke="#c8c8c8" stroke-width="0.9"/>
<path d="M883.1,732.3 Q887.8000000000001,732.5 888.6,737.2 Q889.4,732.5 894.1,732.3" fill="none" stroke="#c8c8c8" stroke-width="0.9"/>
<path d="M883.1,785.5 Q887.8000000000001,785.3 888.6,781 Q889.4,785.3 894.1,785.5 Z" fill="#262626" stroke="#c8c8c8" stroke-width="0.9"/>
<path d="M904.1,732.3 Q908.8000000000001,732.5 909.6,737.2 Q910.4,732.5 915.1,732.3" fill="none" stroke="#c8c8c8" stroke-width="0.9"/>
<path d="M904.1,785.5 Q908.8000000000001,785.3 909.6,781 Q910.4,785.3 915.1,785.5 Z" fill="#262626" stroke="#c8c8c8" stroke-width="0.9"/>
<path d="M949.1,732.3 Q953.8000000000001,732.5 954.6,737.2 Q955.4,732.5 960.1,732.3" fill="none" stroke="#c8c8c8" stroke-width="0.9"/>
<path d="M949.1,785.5 Q953.8000000000001,785.3 954.6,781 Q955.4,785.3 960.1,785.5 Z" fill="#262626" stroke="#c8c8c8" stroke-width="0.9"/>
<path d="M1015.1,732.3 Q1019.8000000000001,732.5 1020.6,737.2 Q1021.4,732.5 1026.1,732.3" fill="none" stroke="#c8c8c8" stroke-width="0.9"/>
<path d="M1015.1,785.5 Q1019.8000000000001,785.3 1020.6,781 Q1021.4,785.3 1026.1,785.5 Z" fill="#262626" stroke="#c8c8c8" stroke-width="0.9"/>
<rect x="0" y="786" width="1024" height="17.5" fill="#494949"/>
<rect x="0" y="803.3" width="1024" height="1.2" fill="#5e5e5e"/>
<rect x="0" y="804.5" width="1024" height="1" fill="#4a4a4a"/>
<rect x="0" y="805.5" width="1024" height="1" fill="#666"/>
<rect x="0" y="806.5" width="1024" height="29.5" fill="#4d4d4d"/>
<rect x="0" y="805.5" width="1024" height="2.8" fill="#444"/>
<rect x="252" y="807" width="9.5" height="28" fill="#3c3c3c"/>
<rect x="81" y="807" width="75" height="28" fill="#5a8d8d"/>
<rect x="81" y="807" width="0.8" height="28" fill="#9ac8c8"/>
<rect x="81" y="824" width="75" height="0.9" fill="#a8d8d8"/>
<svg x="81" y="807" width="75" height="28" viewBox="81 807 75 28"><text x="84" y="821" font-family="Liberation Sans" font-size="9.6" fill="#e4f0f0">TEA101_Radiopl</text></svg>
<rect x="156" y="807" width="27" height="28" fill="#5a8d8d"/>
<rect x="156" y="807" width="0.8" height="28" fill="#9ac8c8"/>
<rect x="156" y="824" width="27" height="0.9" fill="#a8d8d8"/>
<svg x="156" y="807" width="27" height="28" viewBox="156 807 27 28"><text x="159" y="821" font-family="Liberation Sans" font-size="9.6" fill="#e4f0f0">TEA1</text></svg>
<rect x="183" y="807" width="69" height="28" fill="#5a8d8d"/>
<rect x="183" y="807" width="0.8" height="28" fill="#9ac8c8"/>
<rect x="183" y="824" width="69" height="0.9" fill="#a8d8d8"/>
<svg x="183" y="807" width="69" height="28" viewBox="183 807 69 28"><text x="186" y="821" font-family="Liberation Sans" font-size="9.6" fill="#e4f0f0">TEA101_Radiop</text></svg>
<rect x="261.5" y="807" width="27.0" height="28" fill="#5a8d8d"/>
<rect x="261.5" y="807" width="0.8" height="28" fill="#9ac8c8"/>
<rect x="261.5" y="824" width="27.0" height="0.9" fill="#a8d8d8"/>
<svg x="261.5" y="807" width="27.0" height="28" viewBox="261.5 807 27.0 28"><text x="264.5" y="821" font-family="Liberation Sans" font-size="9.6" fill="#e4f0f0">TEA1</text></svg>
<rect x="432" y="807" width="32" height="28" fill="#5a8d8d"/>
<rect x="432" y="807" width="0.8" height="28" fill="#9ac8c8"/>
<rect x="432" y="824" width="32" height="0.9" fill="#a8d8d8"/>
<svg x="432" y="807" width="32" height="28" viewBox="432 807 32 28"><text x="435" y="821" font-family="Liberation Sans" font-size="9.6" fill="#e4f0f0">TEA10</text></svg>
<rect x="503" y="807" width="52" height="28" fill="#5a8d8d"/>
<rect x="503" y="807" width="0.8" height="28" fill="#9ac8c8"/>
<rect x="503" y="824" width="52" height="0.9" fill="#a8d8d8"/>
<svg x="503" y="807" width="52" height="28" viewBox="503 807 52 28"><text x="506" y="821" font-family="Liberation Sans" font-size="9.6" fill="#e4f0f0">TEA101_Sc</text></svg>
<rect x="909" y="807" width="68" height="28" fill="#5a8d8d"/>
<rect x="909" y="807" width="0.8" height="28" fill="#9ac8c8"/>
<rect x="909" y="824" width="68" height="0.9" fill="#a8d8d8"/>
<svg x="909" y="807" width="68" height="28" viewBox="909 807 68 28"><text x="912" y="821" font-family="Liberation Sans" font-size="9.6" fill="#e4f0f0">TEA101_Radio</text></svg>
<rect x="0" y="836" width="1024" height="1.2" fill="#666"/>
<rect x="0" y="837.2" width="1024" height="3.5" fill="#464646"/>
<defs><linearGradient id="sbg" x1="0" y1="0" x2="0" y2="1"><stop offset="0" stop-color="#565656"/><stop offset="1" stop-color="#3c3c3c"/></linearGradient></defs>
<defs><linearGradient id="sbk" x1="0" y1="0" x2="0" y2="1"><stop offset="0" stop-color="#1c1c1c"/><stop offset="1" stop-color="#0d0d0d"/></linearGradient></defs><rect x="0" y="840.6" width="630" height="12" fill="url(#sbk)"/>
<rect x="630" y="840.6" width="394" height="12.5" fill="url(#sbg)"/>
<rect x="0" y="853" width="1024" height="4.2" fill="#4a4a52"/>
<rect x="0" y="857.2" width="1024" height="2.8" fill="#8b2a28"/>
<rect x="95" y="680" width="2" height="156" fill="#c83a30" opacity="0.7"/>
<path d="M90.8,680 L101.2,680 L96,686 Z" fill="#e02828" stroke="#801010" stroke-width="0.6"/>
</svg>
</body></html>
